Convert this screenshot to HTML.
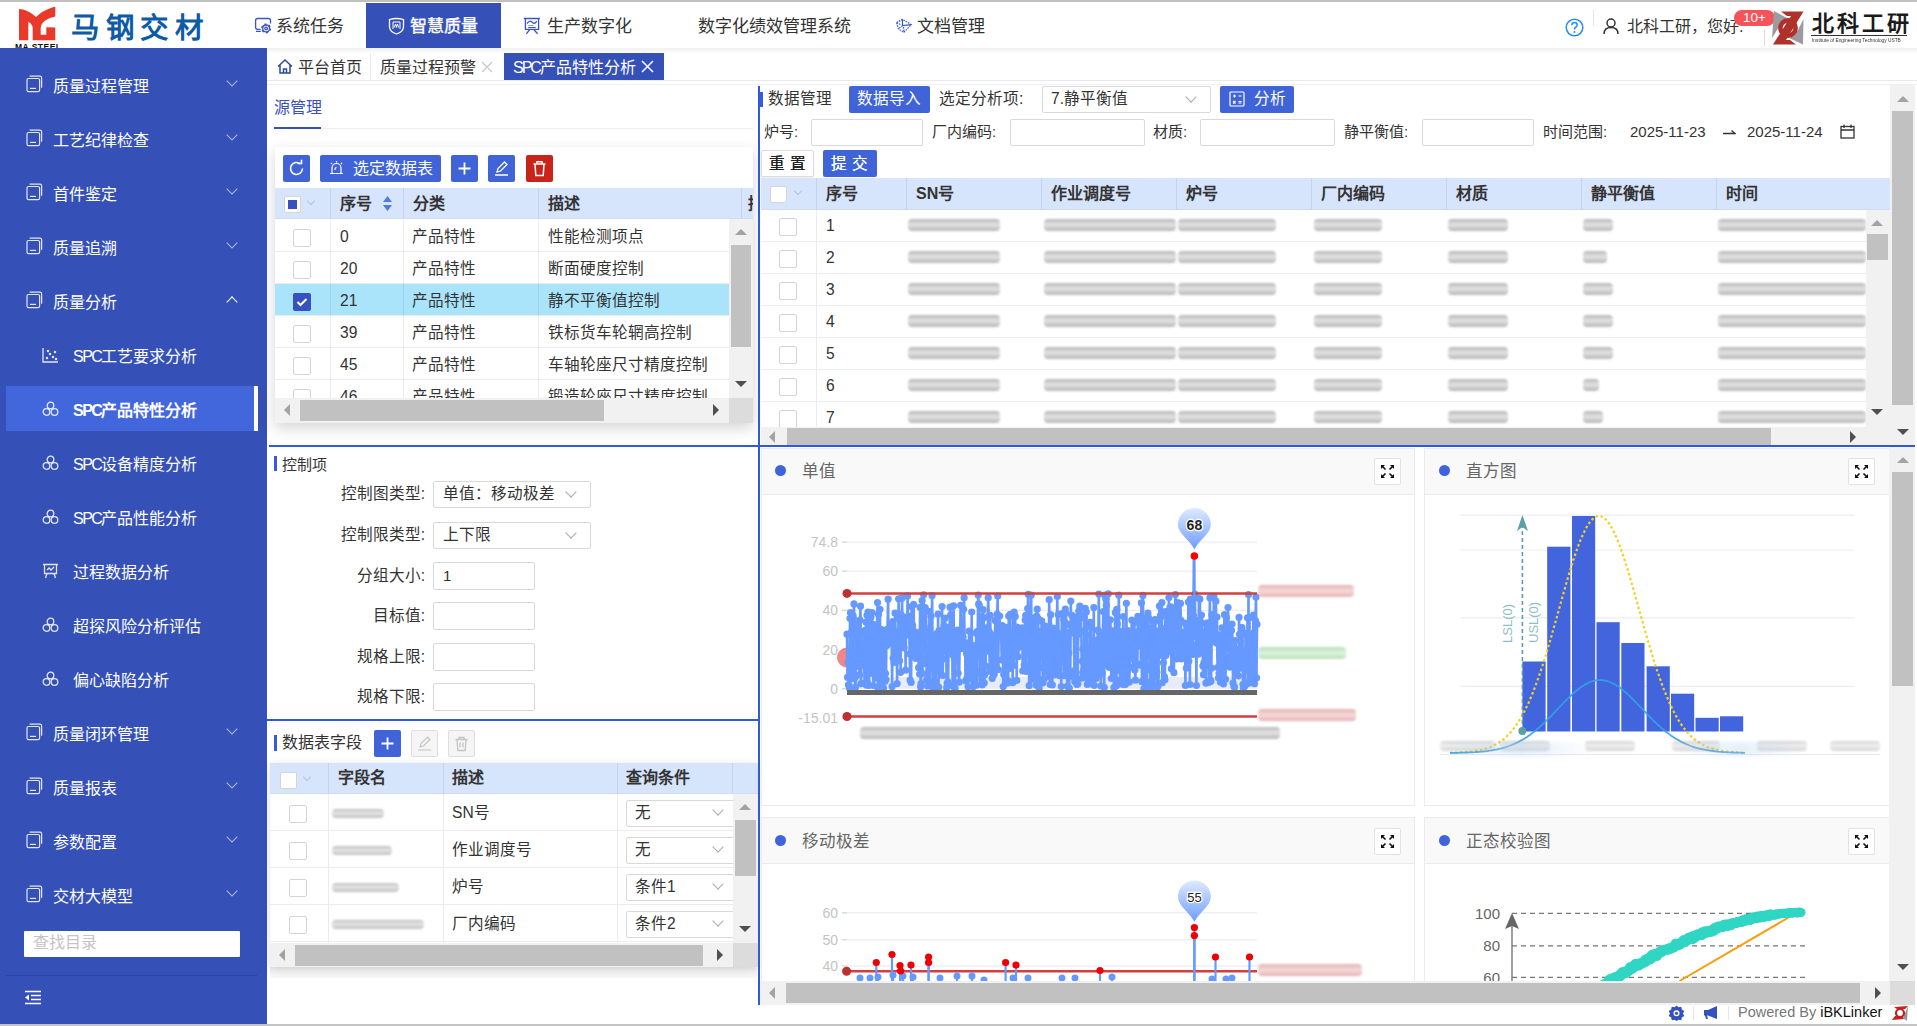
<!DOCTYPE html>
<html lang="zh-CN"><head><meta charset="utf-8">
<style>
*{box-sizing:border-box;margin:0;padding:0}
html,body{width:1917px;height:1026px;overflow:hidden;background:#fff;font-family:"Liberation Sans",sans-serif;color:#333}
.a{position:absolute}
.t{position:absolute;white-space:nowrap;line-height:1}
#topline{left:0;top:0;width:1917px;height:2px;background:#c4c4c4}
#header{left:0;top:2px;width:1917px;height:46px;background:#fff;box-shadow:0 1px 4px rgba(0,0,0,.12)}
.nav{font-size:17px;color:#333;top:18px!important}
#side{left:0;top:48px;width:267px;height:978px;background:#3551b8}
.si{position:absolute;left:0;width:267px;height:54px;color:#fff;font-size:16px}
.si .tx{position:absolute;left:53px;top:17px;line-height:20px;white-space:nowrap}
.si.sub .tx{left:73px}
.chev{position:absolute;left:227px;top:22px;width:8px;height:8px;border-right:1.5px solid rgba(255,255,255,.55);border-bottom:1.5px solid rgba(255,255,255,.55);transform:rotate(45deg)}
.chev.up{transform:rotate(-135deg);top:27px;border-color:#fff}
.ic1{position:absolute;left:27px;top:19px;width:15px;height:16px}
#tabbar{left:267px;top:48px;width:1650px;height:33px;background:linear-gradient(#f0f0f2,#fff 6px);border-bottom:1px solid #e8e9ee}
.tab{position:absolute;top:5px;height:27px;font-size:16px;line-height:27px;color:#333;white-space:nowrap}
.btn{position:absolute;background:#4064d8;border-radius:2px;color:#fff}
.chk{position:absolute;width:17px;height:17px;border:1px solid #d5d5d5;border-radius:2px;background:#fff}
.th{position:absolute;font-size:16px;font-weight:bold;color:#333;line-height:20px;white-space:nowrap}
.td{position:absolute;font-size:15.6px;color:#333;line-height:20px;white-space:nowrap}
.blur{position:absolute;background:linear-gradient(180deg,#8a8a8a,#d2d2d2 45%,#c8c8c8 55%,#8a8a8a);filter:blur(1px);border-radius:4px;opacity:.62}
.inp{position:absolute;border:1px solid #d9d9d9;border-radius:2px;background:#fff}
.lbl{position:absolute;font-size:15px;color:#333;line-height:20px;white-space:nowrap}
.dd{position:absolute;width:8px;height:8px;border-right:1px solid #aaa;border-bottom:1px solid #aaa;transform:rotate(45deg)}
</style></head><body>
<div id="topline" class="a"></div>
<div id="header" class="a"></div>
<div class="a" style="left:0;top:0;width:1917px;height:48px">
<svg class="a" style="left:0;top:0" width="70" height="48" viewBox="0 0 70 48">
<path d="M19,9 C24,9 31,12 36,17 C41,12 49,8 55.3,6.8 L55.3,16.6 C48,18 41,22 40.7,28 L40.7,34.8 L46.3,34.8 L46.3,27.3 L55.3,27.6 L55.3,40.2 L32.7,40.2 L32.7,28 C32.7,25 30,22.5 28.3,22 L28.3,40.2 L19,40.2 Z" fill="#e8392a"/>
<text x="15" y="50" font-family="Liberation Sans" font-weight="bold" font-size="8.5" fill="#111" textLength="46">MA STEEL</text>
</svg>
<div class="t" style="left:71px;top:14px;font-size:28.5px;font-weight:bold;color:#0d5aa7;letter-spacing:5.7px">马钢交材</div>
<svg class="a" style="left:250px;top:10px" width="30" height="30" viewBox="0 0 30 30" fill="none" stroke="#3a55c8" stroke-width="1.3"><path d="M20.5,13.5 V10.5 Q20.5,8.5 18.5,8.5 H7.6 Q5.6,8.5 5.6,10.5 V17.3 Q5.6,19.3 7.6,19.3 H10.5 M6,21.3 H10.8"/><circle cx="16.1" cy="18.4" r="3.4"/><circle cx="16.1" cy="18.4" r="4.3" stroke-width="1.4" stroke-dasharray="2.2 2.3"/><circle cx="16.1" cy="18.4" r="1.3"/></svg>
<div class="t nav" style="left:276px;top:15px">系统任务</div>
<div class="a" style="left:366px;top:3px;width:135px;height:45px;background:#3551b8"></div>
<svg class="a" style="left:388px;top:17px" width="17" height="18" viewBox="0 0 17 18" fill="none" stroke="#fff" stroke-width="1.3"><path d="M1.5 2.5 Q8.5 0.5 15.5 2.5 V10 Q15 15 8.5 17 Q2 15 1.5 10 Z"/><path d="M5 12 V5 H12 V12 M6.3 10.5 L7.5 7 L8.7 10.5 M8.3 10.5 L9.5 7 L10.7 10.5" stroke-width="1"/></svg>
<div class="t nav" style="left:410px;top:15px;color:#fff;-webkit-text-stroke:.35px #fff">智慧质量</div>
<svg class="a" style="left:518px;top:10px" width="30" height="30" viewBox="0 0 30 30" fill="none" stroke="#3a55c8" stroke-width="1.3"><path d="M5.8,8.5 H21.9" stroke-width="1.5"/><path d="M7.4,8.5 V19.3 H20.6 V8.5 M9,13.5 C11,11 12,11 13,11.3 C14.5,12 15,13.6 16,13.5 C17,13.4 18,12 19,11.3 M11.8,19.5 L8.3,23.8 M15.8,19.5 L19.6,23.8"/><rect x="10.2" y="15" width="5.6" height="1" fill="#8fa0e0" stroke="none"/><rect x="10.2" y="17" width="7.6" height="1" fill="#3a55c8" stroke="none"/></svg>
<div class="t nav" style="left:547px;top:15px">生产数字化</div>
<div class="t nav" style="left:698px;top:15px">数字化绩效管理系统</div>
<svg class="a" style="left:890px;top:10px" width="30" height="30" viewBox="0 0 30 30" fill="none" stroke="#3a55c8" stroke-width="1.2"><path d="M12.5,9.4 V15.6 L21.3,14.6"/><path d="M6.6,12.6 L12.5,9.4 L21.3,14.6 L13.9,22.4 L8.4,18.9 L6.6,12.6 M12.5,15.6 L8.4,18.9 M6.6,12.6 L10.5,14.5 M13.6,17 L13.9,22.4" stroke-dasharray="1.6 1"/></svg>
<div class="t nav" style="left:917px;top:15px">文档管理</div>
<svg class="a" style="left:1565px;top:18px" width="19" height="19" viewBox="0 0 19 19"><circle cx="9.5" cy="9.5" r="8.3" fill="none" stroke="#2a8cf0" stroke-width="1.5"/><path d="M6.8 7.3 Q6.8 4.6 9.5 4.6 Q12.2 4.6 12.2 7 Q12.2 8.6 10.3 9.5 Q9.5 10 9.5 11.5" fill="none" stroke="#2a8cf0" stroke-width="1.5"/><circle cx="9.5" cy="14" r="1" fill="#2a8cf0"/></svg>
<div class="a" style="left:1593px;top:10px;width:1px;height:16px;background:#e6e6e6"></div>
<svg class="a" style="left:1603px;top:18px" width="16" height="16" viewBox="0 0 16 16" fill="none" stroke="#333" stroke-width="1.5"><circle cx="8" cy="5" r="4"/><path d="M1 16 Q1 9.5 8 9.5 Q15 9.5 15 16"/></svg>
<div class="t" style="left:1627px;top:19px;font-size:16px;color:#333">北科工研，您好:</div>
<div class="a" style="left:1734px;top:10px;width:41px;height:16px;border-radius:8px;background:#f5535a;color:#fff;font-size:13.5px;line-height:16px;text-align:center">10+</div>
<div class="a" style="left:1764px;top:30px;width:1px;height:16px;background:#ddd"></div>
<svg class="a" style="left:1765px;top:5px" width="50" height="45" viewBox="1765 5 50 45"><path d="M1774,11 L1789,19 L1783,21 L1779,27 L1772,38Z" fill="#9b9ba0"/><path d="M1803.5,19 L1803,44.5 L1789,38 L1795,35 L1798,30Z" fill="#9b9ba0"/><path d="M1781,11.6 L1803.5,11.6 L1786,40 L1790,40 L1796,44.6 L1773,44.6 L1791,16 L1787,16 Z" fill="#b0302a"/><circle cx="1788" cy="28" r="7.6" fill="none" stroke="#b0302a" stroke-width="4.6"/></svg>
<div class="t" style="left:1812px;top:13px;font-size:22px;font-weight:bold;color:#1a1a1a;letter-spacing:3px">北科工研</div>
<div class="a" style="left:1811px;top:35px;width:96px;height:1px;background:#333"></div>
<div class="a" style="left:1812px;top:37px;width:96px;height:8px;overflow:hidden"><div class="t" style="left:0;top:0;font-size:6px;color:#333;transform:scaleX(.8);transform-origin:0 0">Institute of Engineering Technology USTB</div></div>
</div>
<div id="side" class="a"></div>
<svg class="a" style="left:26px;top:75px" width="18" height="18" viewBox="0 0 18 18" fill="none" stroke="rgba(255,255,255,.85)" stroke-width="1.2"><path d="M3.6,1.1 H14 Q15.6,1.1 15.6,2.7 V12.8"/><rect x="1" y="3.5" width="12.6" height="13.1" rx="1.6"/><path d="M4,13.4 H10"/></svg>
<div class="t" style="left:53px;top:79px;font-size:16px;color:#fff">质量过程管理</div>
<div class="a" style="left:228px;top:77px;width:8px;height:8px;border-right:1.6px solid rgba(255,255,255,.6);border-bottom:1.6px solid rgba(255,255,255,.6);transform:rotate(45deg)"></div>
<svg class="a" style="left:26px;top:129px" width="18" height="18" viewBox="0 0 18 18" fill="none" stroke="rgba(255,255,255,.85)" stroke-width="1.2"><path d="M3.6,1.1 H14 Q15.6,1.1 15.6,2.7 V12.8"/><rect x="1" y="3.5" width="12.6" height="13.1" rx="1.6"/><path d="M4,13.4 H10"/></svg>
<div class="t" style="left:53px;top:133px;font-size:16px;color:#fff">工艺纪律检查</div>
<div class="a" style="left:228px;top:131px;width:8px;height:8px;border-right:1.6px solid rgba(255,255,255,.6);border-bottom:1.6px solid rgba(255,255,255,.6);transform:rotate(45deg)"></div>
<svg class="a" style="left:26px;top:183px" width="18" height="18" viewBox="0 0 18 18" fill="none" stroke="rgba(255,255,255,.85)" stroke-width="1.2"><path d="M3.6,1.1 H14 Q15.6,1.1 15.6,2.7 V12.8"/><rect x="1" y="3.5" width="12.6" height="13.1" rx="1.6"/><path d="M4,13.4 H10"/></svg>
<div class="t" style="left:53px;top:187px;font-size:16px;color:#fff">首件鉴定</div>
<div class="a" style="left:228px;top:185px;width:8px;height:8px;border-right:1.6px solid rgba(255,255,255,.6);border-bottom:1.6px solid rgba(255,255,255,.6);transform:rotate(45deg)"></div>
<svg class="a" style="left:26px;top:237px" width="18" height="18" viewBox="0 0 18 18" fill="none" stroke="rgba(255,255,255,.85)" stroke-width="1.2"><path d="M3.6,1.1 H14 Q15.6,1.1 15.6,2.7 V12.8"/><rect x="1" y="3.5" width="12.6" height="13.1" rx="1.6"/><path d="M4,13.4 H10"/></svg>
<div class="t" style="left:53px;top:241px;font-size:16px;color:#fff">质量追溯</div>
<div class="a" style="left:228px;top:239px;width:8px;height:8px;border-right:1.6px solid rgba(255,255,255,.6);border-bottom:1.6px solid rgba(255,255,255,.6);transform:rotate(45deg)"></div>
<svg class="a" style="left:26px;top:291px" width="18" height="18" viewBox="0 0 18 18" fill="none" stroke="rgba(255,255,255,.85)" stroke-width="1.2"><path d="M3.6,1.1 H14 Q15.6,1.1 15.6,2.7 V12.8"/><rect x="1" y="3.5" width="12.6" height="13.1" rx="1.6"/><path d="M4,13.4 H10"/></svg>
<div class="t" style="left:53px;top:295px;font-size:16px;color:#fff">质量分析</div>
<div class="a" style="left:228px;top:298px;width:8px;height:8px;border-right:1.8px solid #fff;border-bottom:1.8px solid #fff;transform:rotate(-135deg)"></div>
<svg class="a" style="left:42px;top:347px" width="17" height="16" viewBox="0 0 17 16" fill="none" stroke="rgba(255,255,255,.85)" stroke-width="1.3"><path d="M1 1 V15 H16"/><circle cx="5" cy="11" r=".6"/><circle cx="8" cy="7" r=".6"/><circle cx="11" cy="10" r=".6"/><circle cx="13" cy="5" r=".6"/><circle cx="6" cy="4" r=".6"/><circle cx="14" cy="12" r=".6"/></svg>
<div class="t" style="left:73px;top:349px;font-size:16px;color:#fff;font-weight:normal"><span style="letter-spacing:-1.5px">SPC</span>工艺要求分析</div>
<div class="a" style="left:6px;top:386px;width:251px;height:45px;background:#4266dc"></div>
<div class="a" style="left:254px;top:386px;width:4px;height:45px;background:#fffce8"></div>
<svg class="a" style="left:42px;top:401px" width="17" height="16" viewBox="0 0 17 16" fill="none" stroke="rgba(255,255,255,.85)" stroke-width="1.3"><circle cx="8.5" cy="4.5" r="3.3"/><circle cx="4.5" cy="11" r="3.3"/><circle cx="12.5" cy="11" r="3.3"/></svg>
<div class="t" style="left:73px;top:403px;font-size:16px;color:#fff;font-weight:bold"><span style="letter-spacing:-1.5px">SPC</span>产品特性分析</div>
<svg class="a" style="left:42px;top:455px" width="17" height="16" viewBox="0 0 17 16" fill="none" stroke="rgba(255,255,255,.85)" stroke-width="1.3"><circle cx="8.5" cy="4.5" r="3.3"/><circle cx="4.5" cy="11" r="3.3"/><circle cx="12.5" cy="11" r="3.3"/></svg>
<div class="t" style="left:73px;top:457px;font-size:16px;color:#fff;font-weight:normal"><span style="letter-spacing:-1.5px">SPC</span>设备精度分析</div>
<svg class="a" style="left:42px;top:509px" width="17" height="16" viewBox="0 0 17 16" fill="none" stroke="rgba(255,255,255,.85)" stroke-width="1.3"><circle cx="8.5" cy="4.5" r="3.3"/><circle cx="4.5" cy="11" r="3.3"/><circle cx="12.5" cy="11" r="3.3"/></svg>
<div class="t" style="left:73px;top:511px;font-size:16px;color:#fff;font-weight:normal"><span style="letter-spacing:-1.5px">SPC</span>产品性能分析</div>
<svg class="a" style="left:42px;top:563px" width="17" height="16" viewBox="0 0 17 16" fill="none" stroke="rgba(255,255,255,.85)" stroke-width="1.3"><path d="M1 1.5 H16 M2.5 1.5 V10.5 H14.5 V1.5 M5 10.5 L3.5 15 M12 10.5 L13.5 15 M5 7 L7 5 L9 7 L12 4"/></svg>
<div class="t" style="left:73px;top:565px;font-size:16px;color:#fff;font-weight:normal">过程数据分析</div>
<svg class="a" style="left:42px;top:617px" width="17" height="16" viewBox="0 0 17 16" fill="none" stroke="rgba(255,255,255,.85)" stroke-width="1.3"><circle cx="8.5" cy="4.5" r="3.3"/><circle cx="4.5" cy="11" r="3.3"/><circle cx="12.5" cy="11" r="3.3"/></svg>
<div class="t" style="left:73px;top:619px;font-size:16px;color:#fff;font-weight:normal">超探风险分析评估</div>
<svg class="a" style="left:42px;top:671px" width="17" height="16" viewBox="0 0 17 16" fill="none" stroke="rgba(255,255,255,.85)" stroke-width="1.3"><circle cx="8.5" cy="4.5" r="3.3"/><circle cx="4.5" cy="11" r="3.3"/><circle cx="12.5" cy="11" r="3.3"/></svg>
<div class="t" style="left:73px;top:673px;font-size:16px;color:#fff;font-weight:normal">偏心缺陷分析</div>
<svg class="a" style="left:26px;top:723px" width="18" height="18" viewBox="0 0 18 18" fill="none" stroke="rgba(255,255,255,.85)" stroke-width="1.2"><path d="M3.6,1.1 H14 Q15.6,1.1 15.6,2.7 V12.8"/><rect x="1" y="3.5" width="12.6" height="13.1" rx="1.6"/><path d="M4,13.4 H10"/></svg>
<div class="t" style="left:53px;top:727px;font-size:16px;color:#fff">质量闭环管理</div>
<div class="a" style="left:228px;top:725px;width:8px;height:8px;border-right:1.6px solid rgba(255,255,255,.6);border-bottom:1.6px solid rgba(255,255,255,.6);transform:rotate(45deg)"></div>
<svg class="a" style="left:26px;top:777px" width="18" height="18" viewBox="0 0 18 18" fill="none" stroke="rgba(255,255,255,.85)" stroke-width="1.2"><path d="M3.6,1.1 H14 Q15.6,1.1 15.6,2.7 V12.8"/><rect x="1" y="3.5" width="12.6" height="13.1" rx="1.6"/><path d="M4,13.4 H10"/></svg>
<div class="t" style="left:53px;top:781px;font-size:16px;color:#fff">质量报表</div>
<div class="a" style="left:228px;top:779px;width:8px;height:8px;border-right:1.6px solid rgba(255,255,255,.6);border-bottom:1.6px solid rgba(255,255,255,.6);transform:rotate(45deg)"></div>
<svg class="a" style="left:26px;top:831px" width="18" height="18" viewBox="0 0 18 18" fill="none" stroke="rgba(255,255,255,.85)" stroke-width="1.2"><path d="M3.6,1.1 H14 Q15.6,1.1 15.6,2.7 V12.8"/><rect x="1" y="3.5" width="12.6" height="13.1" rx="1.6"/><path d="M4,13.4 H10"/></svg>
<div class="t" style="left:53px;top:835px;font-size:16px;color:#fff">参数配置</div>
<div class="a" style="left:228px;top:833px;width:8px;height:8px;border-right:1.6px solid rgba(255,255,255,.6);border-bottom:1.6px solid rgba(255,255,255,.6);transform:rotate(45deg)"></div>
<svg class="a" style="left:26px;top:885px" width="18" height="18" viewBox="0 0 18 18" fill="none" stroke="rgba(255,255,255,.85)" stroke-width="1.2"><path d="M3.6,1.1 H14 Q15.6,1.1 15.6,2.7 V12.8"/><rect x="1" y="3.5" width="12.6" height="13.1" rx="1.6"/><path d="M4,13.4 H10"/></svg>
<div class="t" style="left:53px;top:889px;font-size:16px;color:#fff">交材大模型</div>
<div class="a" style="left:228px;top:887px;width:8px;height:8px;border-right:1.6px solid rgba(255,255,255,.6);border-bottom:1.6px solid rgba(255,255,255,.6);transform:rotate(45deg)"></div>
<div class="a" style="left:24px;top:931px;width:216px;height:26px;background:#fff;border-radius:1px"></div>
<div class="t" style="left:33px;top:935px;font-size:16px;color:#c4c4c4">查找目录</div>
<div class="a" style="left:6px;top:975px;width:251px;height:1px;background:#2b449e"></div>
<svg class="a" style="left:24px;top:990px" width="18" height="15" viewBox="0 0 18 15" fill="none" stroke="#fff" stroke-width="1.6"><path d="M1 1.5 H17 M7 5.5 H17 M7 9.5 H17 M1 13.5 H17"/><path d="M1 7.5 L5 4.5 V10.5Z" fill="#fff" stroke="none"/></svg>
<div id="tabbar" class="a"></div>

<svg class="a" style="left:277px;top:59px" width="16" height="15" viewBox="0 0 16 15" fill="none" stroke="#2c4a9a" stroke-width="1.5"><path d="M1 7.5 L8 1 L15 7.5 M3 6 V14 H13 V6 M6.5 14 V10 H9.5 V14"/></svg>
<div class="t" style="left:298px;top:60px;font-size:16px;color:#333">平台首页</div>
<div class="a" style="left:370px;top:53px;width:1px;height:27px;background:#e8e8e8"></div>
<div class="t" style="left:380px;top:60px;font-size:16px;color:#333">质量过程预警</div>
<svg class="a" style="left:481px;top:61px" width="12" height="12" viewBox="0 0 12 12" stroke="#c8c8c8" stroke-width="1.3"><path d="M1 1 L11 11 M11 1 L1 11"/></svg>
<div class="a" style="left:504px;top:53px;width:160px;height:27px;background:#3551b8"></div>
<div class="t" style="left:513px;top:60px;font-size:16px;color:#fff"><span style="letter-spacing:-2px">SPC</span>产品特性分析</div>
<svg class="a" style="left:641px;top:60px" width="13" height="13" viewBox="0 0 13 13" stroke="#fff" stroke-width="1.5"><path d="M1 1 L12 12 M12 1 L1 12"/></svg>


<!-- LEFT TOP PANEL -->
<div class="a" style="left:267px;top:84px;width:1650px;height:1px;background:#f0f0f2"></div>
<div class="t" style="left:274px;top:100px;font-size:16px;color:#3a4fc0">源管理</div>
<div class="a" style="left:274px;top:127px;width:47px;height:2px;background:#3551b8"></div>
<div class="a" style="left:321px;top:128px;width:432px;height:1px;background:#eceef2"></div>
<div class="a" style="left:275px;top:147px;width:478px;height:276px;background:#fff;box-shadow:0 5px 14px rgba(0,0,0,.17)"></div>
<div class="btn" style="left:283px;top:155px;width:27px;height:27px"></div>
<svg class="a" style="left:287px;top:159px" width="19" height="19" viewBox="0 0 19 19" fill="none" stroke="#fff" stroke-width="1.6"><path d="M15.5 9.5 A6 6 0 1 1 13.5 5"/><path d="M10.5 4.5 L14.5 4.5 L14.5 0.8"/></svg>
<div class="btn" style="left:320px;top:155px;width:121px;height:27px"></div>
<svg class="a" style="left:329px;top:160px" width="15" height="15" viewBox="0 0 15 15" fill="none" stroke="#fff" stroke-width="1.2"><path d="M3 13 V8 A4.5 4.5 0 0 1 12 8 V13 M1 13.5 H14 M7.5 1 V2.5 M2 3 L3 4 M13 3 L12 4 M6 10 V9 A1.5 1.5 0 0 1 7.5 7.5"/></svg>
<div class="t" style="left:353px;top:161px;font-size:16px;color:#fff">选定数据表</div>
<div class="btn" style="left:451px;top:155px;width:27px;height:27px"></div>
<svg class="a" style="left:457px;top:161px" width="15" height="15" viewBox="0 0 15 15" stroke="#fff" stroke-width="1.8"><path d="M7.5 1.5 V13.5 M1.5 7.5 H13.5"/></svg>
<div class="btn" style="left:488px;top:155px;width:27px;height:27px"></div>
<svg class="a" style="left:493px;top:160px" width="17" height="17" viewBox="0 0 17 17" fill="none" stroke="#fff" stroke-width="1.3"><path d="M4 12 L5 8.5 L11.5 2 L14 4.5 L7.5 11 Z M2 15 H15"/></svg>
<div class="btn" style="left:526px;top:155px;width:27px;height:27px;background:#c9241a"></div>
<svg class="a" style="left:532px;top:160px" width="15" height="17" viewBox="0 0 15 17" fill="none" stroke="#fff" stroke-width="1.5"><path d="M1.5 4 H13.5 M5 4 V1.8 H10 V4 M3 4 L3.8 15.5 H11.2 L12 4"/></svg>
<div class="a" style="left:275px;top:188px;width:478px;height:31px;background:#d6e4fc;border-bottom:1px solid #cfdcf3"></div>
<div class="a" style="left:330px;top:188px;width:1px;height:31px;background:#c5d4ee"></div>
<div class="a" style="left:403px;top:188px;width:1px;height:31px;background:#c5d4ee"></div>
<div class="a" style="left:538px;top:188px;width:1px;height:31px;background:#c5d4ee"></div>
<div class="a" style="left:741px;top:188px;width:1px;height:31px;background:#c5d4ee"></div>
<div class="chk" style="left:284px;top:196px"></div>
<div class="a" style="left:288px;top:200px;width:9px;height:9px;background:#3851c0"></div>
<div class="a" style="left:308px;top:198px;width:6px;height:6px;border-right:1px solid #b8c4dc;border-bottom:1px solid #b8c4dc;transform:rotate(45deg)"></div>
<div class="th" style="left:340px;top:194px">序号</div>
<svg class="a" style="left:383px;top:196px" width="9" height="15" viewBox="0 0 9 15" fill="#4f7be8"><path d="M4.5 0 L9 6 H0Z M0 9 H9 L4.5 15Z"/></svg>
<div class="th" style="left:413px;top:194px">分类</div>
<div class="th" style="left:548px;top:194px">描述</div>
<div class="a" style="left:741px;top:188px;width:12px;height:31px;overflow:hidden"><div class="th" style="left:7px;top:6px">描</div></div>
<div class="a" style="left:275px;top:220px;width:454px;height:178px;overflow:hidden"><div class="a" style="left:0;top:0px;width:454px;height:32px;background:#fff;border-bottom:1px solid #ececec"></div><div class="chk" style="left:18px;top:9px;width:18px;height:18px"></div><div class="td" style="left:65px;top:7px">0</div><div class="td" style="left:137px;top:7px">产品特性</div><div class="td" style="left:273px;top:7px">性能检测项点</div><div class="a" style="left:0;top:32px;width:454px;height:32px;background:#fff;border-bottom:1px solid #ececec"></div><div class="chk" style="left:18px;top:41px;width:18px;height:18px"></div><div class="td" style="left:65px;top:39px">20</div><div class="td" style="left:137px;top:39px">产品特性</div><div class="td" style="left:273px;top:39px">断面硬度控制</div><div class="a" style="left:0;top:64px;width:454px;height:32px;background:#a9e4fb;border-bottom:1px solid #ececec"></div><div class="a" style="left:18px;top:73px;width:18px;height:18px;background:#3851c0;border-radius:2px"></div><svg class="a" style="left:21px;top:77px" width="12" height="10" viewBox="0 0 12 10" fill="none" stroke="#fff" stroke-width="2"><path d="M1.5 5 L4.5 8 L10.5 2"/></svg><div class="td" style="left:65px;top:71px">21</div><div class="td" style="left:137px;top:71px">产品特性</div><div class="td" style="left:273px;top:71px">静不平衡值控制</div><div class="a" style="left:0;top:96px;width:454px;height:32px;background:#fff;border-bottom:1px solid #ececec"></div><div class="chk" style="left:18px;top:105px;width:18px;height:18px"></div><div class="td" style="left:65px;top:103px">39</div><div class="td" style="left:137px;top:103px">产品特性</div><div class="td" style="left:273px;top:103px">铁标货车轮辋高控制</div><div class="a" style="left:0;top:128px;width:454px;height:32px;background:#fff;border-bottom:1px solid #ececec"></div><div class="chk" style="left:18px;top:137px;width:18px;height:18px"></div><div class="td" style="left:65px;top:135px">45</div><div class="td" style="left:137px;top:135px">产品特性</div><div class="td" style="left:273px;top:135px">车轴轮座尺寸精度控制</div><div class="a" style="left:0;top:160px;width:454px;height:32px;background:#fff;border-bottom:1px solid #ececec"></div><div class="chk" style="left:18px;top:169px;width:18px;height:18px"></div><div class="td" style="left:65px;top:167px">46</div><div class="td" style="left:137px;top:167px">产品特性</div><div class="td" style="left:273px;top:167px">锻造轮座尺寸精度控制</div><div class="a" style="left:55px;top:0;width:1px;height:179px;background:rgba(0,0,0,.075)"></div><div class="a" style="left:128px;top:0;width:1px;height:179px;background:rgba(0,0,0,.075)"></div><div class="a" style="left:263px;top:0;width:1px;height:179px;background:rgba(0,0,0,.075)"></div></div>
<div class="a" style="left:729px;top:219px;width:24px;height:179px;background:#f1f1f1"></div>
<div class="a" style="left:731px;top:245px;width:20px;height:102px;background:#c1c1c1"></div>
<svg class="a" style="left:735px;top:228px" width="12" height="8" viewBox="0 0 12 8" fill="#a3a3a3"><path d="M0 7 L6 1 L12 7Z"/></svg>
<svg class="a" style="left:735px;top:380px" width="12" height="8" viewBox="0 0 12 8" fill="#505050"><path d="M0 1 L6 7 L12 1Z"/></svg>
<div class="a" style="left:275px;top:398px;width:454px;height:25px;background:#f1f1f1"></div>
<div class="a" style="left:300px;top:400px;width:304px;height:21px;background:#c1c1c1"></div>
<svg class="a" style="left:283px;top:404px" width="8" height="12" viewBox="0 0 8 12" fill="#a3a3a3"><path d="M7 0 L1 6 L7 12Z"/></svg>
<svg class="a" style="left:712px;top:404px" width="8" height="12" viewBox="0 0 8 12" fill="#505050"><path d="M1 0 L7 6 L1 12Z"/></svg>
<div class="a" style="left:729px;top:398px;width:24px;height:25px;background:#dcdcdc"></div>


<!-- RIGHT TOP PANEL -->
<div class="a" style="left:760px;top:92px;width:3px;height:15px;background:#3a5bd9"></div>
<div class="t" style="left:768px;top:91px;font-size:15.6px;color:#333">数据管理</div>
<div class="btn" style="left:849px;top:86px;width:81px;height:27px"></div>
<div class="t" style="left:857px;top:91px;font-size:15.6px;color:#fff">数据导入</div>
<div class="t" style="left:939px;top:91px;font-size:15.6px;color:#333">选定分析项:</div>
<div class="inp" style="left:1042px;top:86px;width:169px;height:27px"></div>
<div class="t" style="left:1051px;top:91px;font-size:15.6px;color:#333">7.静平衡值</div>
<div class="dd" style="left:1187px;top:93px"></div>
<div class="btn" style="left:1220px;top:86px;width:74px;height:27px"></div>
<svg class="a" style="left:1229px;top:91px" width="16" height="16" viewBox="0 0 16 16" fill="none" stroke="#fff" stroke-width="1.2"><rect x="1" y="1" width="14" height="14" rx="1"/><path d="M4 5 H7 M5.5 3.5 V6.5 M9.5 5 H12.5 M4 10 L6.5 12.5 M6.5 10 L4 12.5 M9.5 10.5 H12.5 M9.5 12 H12.5"/></svg>
<div class="t" style="left:1254px;top:91px;font-size:15.6px;color:#fff">分析</div>
<div class="lbl" style="left:764px;top:122px">炉号:</div>
<div class="inp" style="left:811px;top:119px;width:112px;height:27px"></div>
<div class="lbl" style="left:932px;top:122px">厂内编码:</div>
<div class="inp" style="left:1010px;top:119px;width:135px;height:27px"></div>
<div class="lbl" style="left:1153px;top:122px">材质:</div>
<div class="inp" style="left:1200px;top:119px;width:135px;height:27px"></div>
<div class="lbl" style="left:1344px;top:122px">静平衡值:</div>
<div class="inp" style="left:1422px;top:119px;width:112px;height:27px"></div>
<div class="lbl" style="left:1543px;top:122px">时间范围:</div>
<div class="lbl" style="left:1630px;top:122px;font-size:15px">2025-11-23</div>
<svg class="a" style="left:1722px;top:128px" width="14" height="8" viewBox="0 0 14 8" fill="none" stroke="#333" stroke-width="1.3"><path d="M1 5.5 H13 L9.5 2.5"/></svg>
<div class="lbl" style="left:1747px;top:122px;font-size:15px">2025-11-24</div>
<svg class="a" style="left:1840px;top:124px" width="15" height="15" viewBox="0 0 15 15" fill="none" stroke="#333" stroke-width="1.3"><rect x="1" y="2.5" width="13" height="11.5"/><path d="M1 6 H14 M4 0.5 V4 M11 0.5 V4"/></svg>
<div class="a" style="left:761px;top:150px;width:53px;height:27px;background:#fff;border:1px solid #dcdcdc;border-radius:2px;box-shadow:0 1px 2px rgba(0,0,0,.08)"></div>
<div class="t" style="left:769px;top:156px;font-size:15.6px;color:#222;letter-spacing:5px;text-shadow:0 0 .5px #222">重置</div>
<div class="btn" style="left:823px;top:150px;width:54px;height:27px"></div>
<div class="t" style="left:831px;top:156px;font-size:15.6px;color:#fff;letter-spacing:5px;text-shadow:0 0 .6px #fff">提交</div>
<div class="a" style="left:761px;top:178px;width:1129px;height:32px;background:#d6e4fc;border-bottom:1px solid #cfdcf3"></div>
<div class="a" style="left:816px;top:178px;width:1px;height:32px;background:#c5d4ee"></div><div class="a" style="left:906px;top:178px;width:1px;height:32px;background:#c5d4ee"></div><div class="a" style="left:1041px;top:178px;width:1px;height:32px;background:#c5d4ee"></div><div class="a" style="left:1176px;top:178px;width:1px;height:32px;background:#c5d4ee"></div><div class="a" style="left:1311px;top:178px;width:1px;height:32px;background:#c5d4ee"></div><div class="a" style="left:1446px;top:178px;width:1px;height:32px;background:#c5d4ee"></div><div class="a" style="left:1581px;top:178px;width:1px;height:32px;background:#c5d4ee"></div><div class="a" style="left:1716px;top:178px;width:1px;height:32px;background:#c5d4ee"></div><div class="chk" style="left:770px;top:186px"></div><div class="a" style="left:795px;top:188px;width:6px;height:6px;border-right:1px solid #b8c4dc;border-bottom:1px solid #b8c4dc;transform:rotate(45deg)"></div><div class="th" style="left:826px;top:184px">序号</div><div class="th" style="left:916px;top:184px">SN号</div><div class="th" style="left:1051px;top:184px">作业调度号</div><div class="th" style="left:1186px;top:184px">炉号</div><div class="th" style="left:1321px;top:184px">厂内编码</div><div class="th" style="left:1456px;top:184px">材质</div><div class="th" style="left:1591px;top:184px">静平衡值</div><div class="th" style="left:1726px;top:184px">时间</div><div class="a" style="left:761px;top:210px;width:1105px;height:217px;overflow:hidden;background:#fff"><div class="a" style="left:0;top:0px;width:1105px;height:32px;border-bottom:1px solid #ececec"></div><div class="chk" style="left:18px;top:8px;width:18px;height:18px"></div><div class="td" style="left:65px;top:6px">1</div><div class="blur" style="left:147px;top:9px;width:92px;height:12px"></div><div class="blur" style="left:283px;top:9px;width:132px;height:12px"></div><div class="blur" style="left:417px;top:9px;width:98px;height:12px"></div><div class="blur" style="left:553px;top:9px;width:68px;height:12px"></div><div class="blur" style="left:687px;top:9px;width:60px;height:12px"></div><div class="blur" style="left:822px;top:9px;width:30px;height:12px"></div><div class="blur" style="left:957px;top:9px;width:148px;height:12px"></div><div class="a" style="left:0;top:32px;width:1105px;height:32px;border-bottom:1px solid #ececec"></div><div class="chk" style="left:18px;top:40px;width:18px;height:18px"></div><div class="td" style="left:65px;top:38px">2</div><div class="blur" style="left:147px;top:41px;width:92px;height:12px"></div><div class="blur" style="left:283px;top:41px;width:132px;height:12px"></div><div class="blur" style="left:417px;top:41px;width:98px;height:12px"></div><div class="blur" style="left:553px;top:41px;width:68px;height:12px"></div><div class="blur" style="left:687px;top:41px;width:60px;height:12px"></div><div class="blur" style="left:822px;top:41px;width:24px;height:12px"></div><div class="blur" style="left:957px;top:41px;width:148px;height:12px"></div><div class="a" style="left:0;top:64px;width:1105px;height:32px;border-bottom:1px solid #ececec"></div><div class="chk" style="left:18px;top:72px;width:18px;height:18px"></div><div class="td" style="left:65px;top:70px">3</div><div class="blur" style="left:147px;top:73px;width:92px;height:12px"></div><div class="blur" style="left:283px;top:73px;width:132px;height:12px"></div><div class="blur" style="left:417px;top:73px;width:98px;height:12px"></div><div class="blur" style="left:553px;top:73px;width:68px;height:12px"></div><div class="blur" style="left:687px;top:73px;width:60px;height:12px"></div><div class="blur" style="left:822px;top:73px;width:30px;height:12px"></div><div class="blur" style="left:957px;top:73px;width:148px;height:12px"></div><div class="a" style="left:0;top:96px;width:1105px;height:32px;border-bottom:1px solid #ececec"></div><div class="chk" style="left:18px;top:104px;width:18px;height:18px"></div><div class="td" style="left:65px;top:102px">4</div><div class="blur" style="left:147px;top:105px;width:92px;height:12px"></div><div class="blur" style="left:283px;top:105px;width:132px;height:12px"></div><div class="blur" style="left:417px;top:105px;width:98px;height:12px"></div><div class="blur" style="left:553px;top:105px;width:68px;height:12px"></div><div class="blur" style="left:687px;top:105px;width:60px;height:12px"></div><div class="blur" style="left:822px;top:105px;width:30px;height:12px"></div><div class="blur" style="left:957px;top:105px;width:148px;height:12px"></div><div class="a" style="left:0;top:128px;width:1105px;height:32px;border-bottom:1px solid #ececec"></div><div class="chk" style="left:18px;top:136px;width:18px;height:18px"></div><div class="td" style="left:65px;top:134px">5</div><div class="blur" style="left:147px;top:137px;width:92px;height:12px"></div><div class="blur" style="left:283px;top:137px;width:132px;height:12px"></div><div class="blur" style="left:417px;top:137px;width:98px;height:12px"></div><div class="blur" style="left:553px;top:137px;width:68px;height:12px"></div><div class="blur" style="left:687px;top:137px;width:60px;height:12px"></div><div class="blur" style="left:822px;top:137px;width:30px;height:12px"></div><div class="blur" style="left:957px;top:137px;width:148px;height:12px"></div><div class="a" style="left:0;top:160px;width:1105px;height:32px;border-bottom:1px solid #ececec"></div><div class="chk" style="left:18px;top:168px;width:18px;height:18px"></div><div class="td" style="left:65px;top:166px">6</div><div class="blur" style="left:147px;top:169px;width:92px;height:12px"></div><div class="blur" style="left:283px;top:169px;width:132px;height:12px"></div><div class="blur" style="left:417px;top:169px;width:98px;height:12px"></div><div class="blur" style="left:553px;top:169px;width:68px;height:12px"></div><div class="blur" style="left:687px;top:169px;width:60px;height:12px"></div><div class="blur" style="left:822px;top:169px;width:16px;height:12px"></div><div class="blur" style="left:957px;top:169px;width:148px;height:12px"></div><div class="a" style="left:0;top:192px;width:1105px;height:32px;border-bottom:1px solid #ececec"></div><div class="chk" style="left:18px;top:200px;width:18px;height:18px"></div><div class="td" style="left:65px;top:198px">7</div><div class="blur" style="left:147px;top:201px;width:92px;height:12px"></div><div class="blur" style="left:283px;top:201px;width:132px;height:12px"></div><div class="blur" style="left:417px;top:201px;width:98px;height:12px"></div><div class="blur" style="left:553px;top:201px;width:68px;height:12px"></div><div class="blur" style="left:687px;top:201px;width:60px;height:12px"></div><div class="blur" style="left:822px;top:201px;width:20px;height:12px"></div><div class="blur" style="left:957px;top:201px;width:148px;height:12px"></div><div class="a" style="left:55px;top:0;width:1px;height:217px;background:#ececec"></div></div>
<div class="a" style="left:1866px;top:210px;width:24px;height:217px;background:#f1f1f1"></div>
<div class="a" style="left:1867px;top:234px;width:21px;height:26px;background:#c1c1c1"></div>
<svg class="a" style="left:1871px;top:219px" width="12" height="8" viewBox="0 0 12 8" fill="#a3a3a3"><path d="M0 7 L6 1 L12 7Z"/></svg>
<svg class="a" style="left:1871px;top:408px" width="12" height="8" viewBox="0 0 12 8" fill="#505050"><path d="M0 1 L6 7 L12 1Z"/></svg>
<div class="a" style="left:761px;top:427px;width:1129px;height:18px;background:#f1f1f1"></div>
<div class="a" style="left:787px;top:428px;width:984px;height:17px;background:#c1c1c1"></div>
<svg class="a" style="left:768px;top:431px" width="8" height="12" viewBox="0 0 8 12" fill="#a3a3a3"><path d="M7 0 L1 6 L7 12Z"/></svg>
<svg class="a" style="left:1849px;top:431px" width="8" height="12" viewBox="0 0 8 12" fill="#505050"><path d="M1 0 L7 6 L1 12Z"/></svg>
<div class="a" style="left:1890px;top:85px;width:25px;height:360px;background:#f1f1f1"></div>
<div class="a" style="left:1892px;top:111px;width:21px;height:294px;background:#c1c1c1"></div>
<svg class="a" style="left:1897px;top:95px" width="12" height="8" viewBox="0 0 12 8" fill="#a3a3a3"><path d="M0 7 L6 1 L12 7Z"/></svg>
<svg class="a" style="left:1897px;top:428px" width="12" height="8" viewBox="0 0 12 8" fill="#505050"><path d="M0 1 L6 7 L12 1Z"/></svg>

<!-- CONTROL PANEL -->
<div class="a" style="left:274px;top:456px;width:3px;height:15px;background:#3a5bd9"></div>
<div class="t" style="left:282px;top:457px;font-size:15px;color:#333">控制项</div>
<div class="lbl" style="left:225px;width:200px;text-align:right;top:484px;font-size:15.6px">控制图类型:</div><div class="lbl" style="left:225px;width:200px;text-align:right;top:525px;font-size:15.6px">控制限类型:</div><div class="lbl" style="left:225px;width:200px;text-align:right;top:566px;font-size:15.6px">分组大小:</div><div class="lbl" style="left:225px;width:200px;text-align:right;top:606px;font-size:15.6px">目标值:</div><div class="lbl" style="left:225px;width:200px;text-align:right;top:647px;font-size:15.6px">规格上限:</div><div class="lbl" style="left:225px;width:200px;text-align:right;top:687px;font-size:15.6px">规格下限:</div>
<div class="inp" style="left:433px;top:481px;width:158px;height:27px"></div>
<div class="lbl" style="left:443px;top:484px;font-size:15.6px">单值：移动极差</div>
<div class="dd" style="left:567px;top:488px"></div>
<div class="inp" style="left:433px;top:522px;width:158px;height:27px"></div>
<div class="lbl" style="left:443px;top:525px;font-size:15.6px">上下限</div>
<div class="dd" style="left:567px;top:529px"></div>
<div class="inp" style="left:433px;top:562px;width:102px;height:28px"></div>
<div class="lbl" style="left:443px;top:566px;font-size:15px">1</div>
<div class="inp" style="left:433px;top:602px;width:102px;height:28px"></div>
<div class="inp" style="left:433px;top:643px;width:102px;height:28px"></div>
<div class="inp" style="left:433px;top:683px;width:102px;height:28px"></div>
<!-- DATA FIELDS PANEL -->
<div class="a" style="left:274px;top:735px;width:3px;height:16px;background:#3a5bd9"></div>
<div class="t" style="left:282px;top:735px;font-size:16px;color:#333">数据表字段</div>
<div class="btn" style="left:374px;top:730px;width:27px;height:27px"></div>
<svg class="a" style="left:380px;top:736px" width="15" height="15" viewBox="0 0 15 15" stroke="#fff" stroke-width="1.8"><path d="M7.5 1.5 V13.5 M1.5 7.5 H13.5"/></svg>
<div class="a" style="left:411px;top:730px;width:27px;height:27px;background:#f5f5f5;border:1px solid #dedede;border-radius:2px"></div>
<svg class="a" style="left:416px;top:735px" width="17" height="17" viewBox="0 0 17 17" fill="none" stroke="#c4c4c4" stroke-width="1.2"><path d="M4 12 L5 8.5 L11.5 2 L14 4.5 L7.5 11 Z M2 15 H15"/></svg>
<div class="a" style="left:448px;top:730px;width:27px;height:27px;background:#f5f5f5;border:1px solid #dedede;border-radius:2px"></div>
<svg class="a" style="left:454px;top:736px" width="15" height="16" viewBox="0 0 15 16" fill="none" stroke="#c4c4c4" stroke-width="1.3"><path d="M1.5 3.5 H13.5 M5 3.5 V1.5 H10 V3.5 M3 3.5 L3.8 14.5 H11.2 L12 3.5 M6 6.5 V11.5 M9 6.5 V11.5"/></svg>
<div class="a" style="left:270px;top:763px;width:487px;height:215px;background:linear-gradient(180deg,#f0f0f0 0,#f0f0f0 95%,#f7f7f7 100%)"></div><div class="a" style="left:270px;top:763px;width:487px;height:204px;background:#fff;box-shadow:0 2px 8px rgba(0,0,0,.14)"></div>
<div class="a" style="left:270px;top:763px;width:488px;height:31px;background:#d6e4fc;border-bottom:1px solid #cfdcf3"></div>
<div class="a" style="left:328px;top:763px;width:1px;height:31px;background:#c5d4ee"></div><div class="a" style="left:443px;top:763px;width:1px;height:31px;background:#c5d4ee"></div><div class="a" style="left:617px;top:763px;width:1px;height:31px;background:#c5d4ee"></div><div class="a" style="left:732px;top:763px;width:1px;height:31px;background:#c5d4ee"></div><div class="chk" style="left:280px;top:772px"></div><div class="a" style="left:304px;top:774px;width:6px;height:6px;border-right:1px solid #b8c4dc;border-bottom:1px solid #b8c4dc;transform:rotate(45deg)"></div><div class="th" style="left:338px;top:768px">字段名</div><div class="th" style="left:452px;top:768px">描述</div><div class="th" style="left:626px;top:768px">查询条件</div><div class="a" style="left:270px;top:794px;width:463px;height:149px;overflow:hidden;background:#fff"><div class="a" style="left:0;top:0px;width:463px;height:37px;border-bottom:1px solid #ececec"></div><div class="chk" style="left:19px;top:11px;width:18px;height:18px"></div><div class="blur" style="left:62px;top:15px;width:52px;height:9px;opacity:.55"></div><div class="td" style="left:182px;top:9px">SN号</div><div class="inp" style="left:356px;top:6px;width:120px;height:27px"></div><div class="td" style="left:365px;top:9px">无</div><div class="dd" style="left:444px;top:12px"></div><div class="a" style="left:0;top:37px;width:463px;height:37px;border-bottom:1px solid #ececec"></div><div class="chk" style="left:19px;top:48px;width:18px;height:18px"></div><div class="blur" style="left:62px;top:52px;width:60px;height:9px;opacity:.55"></div><div class="td" style="left:182px;top:46px">作业调度号</div><div class="inp" style="left:356px;top:43px;width:120px;height:27px"></div><div class="td" style="left:365px;top:46px">无</div><div class="dd" style="left:444px;top:49px"></div><div class="a" style="left:0;top:74px;width:463px;height:37px;border-bottom:1px solid #ececec"></div><div class="chk" style="left:19px;top:85px;width:18px;height:18px"></div><div class="blur" style="left:62px;top:89px;width:67px;height:9px;opacity:.55"></div><div class="td" style="left:182px;top:83px">炉号</div><div class="inp" style="left:356px;top:80px;width:120px;height:27px"></div><div class="td" style="left:365px;top:83px">条件1</div><div class="dd" style="left:444px;top:86px"></div><div class="a" style="left:0;top:111px;width:463px;height:37px;border-bottom:1px solid #ececec"></div><div class="chk" style="left:19px;top:122px;width:18px;height:18px"></div><div class="blur" style="left:62px;top:126px;width:92px;height:9px;opacity:.55"></div><div class="td" style="left:182px;top:120px">厂内编码</div><div class="inp" style="left:356px;top:117px;width:120px;height:27px"></div><div class="td" style="left:365px;top:120px">条件2</div><div class="dd" style="left:444px;top:123px"></div><div class="a" style="left:58px;top:0;width:1px;height:149px;background:#ececec"></div><div class="a" style="left:173px;top:0;width:1px;height:149px;background:#ececec"></div><div class="a" style="left:347px;top:0;width:1px;height:149px;background:#ececec"></div></div>
<div class="a" style="left:733px;top:794px;width:25px;height:149px;background:#f1f1f1"></div>
<div class="a" style="left:735px;top:820px;width:21px;height:56px;background:#c1c1c1"></div>
<svg class="a" style="left:739px;top:803px" width="12" height="8" viewBox="0 0 12 8" fill="#a3a3a3"><path d="M0 7 L6 1 L12 7Z"/></svg>
<svg class="a" style="left:739px;top:925px" width="12" height="8" viewBox="0 0 12 8" fill="#505050"><path d="M0 1 L6 7 L12 1Z"/></svg>
<div class="a" style="left:270px;top:943px;width:463px;height:24px;background:#f1f1f1"></div>
<div class="a" style="left:295px;top:945px;width:408px;height:21px;background:#c1c1c1"></div>
<svg class="a" style="left:278px;top:949px" width="8" height="12" viewBox="0 0 8 12" fill="#a3a3a3"><path d="M7 0 L1 6 L7 12Z"/></svg>
<svg class="a" style="left:716px;top:949px" width="8" height="12" viewBox="0 0 8 12" fill="#505050"><path d="M1 0 L7 6 L1 12Z"/></svg>
<div class="a" style="left:733px;top:943px;width:25px;height:24px;background:#dcdcdc"></div>


<!-- CHARTS -->
<div class="a" style="left:761px;top:448px;width:654px;height:358px;background:#fff;border:1px solid #ebebeb"></div>
<div class="a" style="left:761px;top:448px;width:654px;height:47px;background:#f9f9f9;border:1px solid #ebebeb"></div>
<div class="a" style="left:775px;top:465px;width:11px;height:11px;border-radius:50%;background:#3f63dc"></div>
<div class="t" style="left:802px;top:463px;font-size:16.5px;color:#666">单值</div>
<div class="a" style="left:1374px;top:458px;width:27px;height:27px;background:#fff;border:1px solid #e2e2e2;border-radius:2px"></div>
<div class="a" style="left:1424px;top:448px;width:466px;height:358px;background:#fff;border:1px solid #ebebeb"></div>
<div class="a" style="left:1424px;top:448px;width:466px;height:47px;background:#f9f9f9;border:1px solid #ebebeb"></div>
<div class="a" style="left:1439px;top:465px;width:11px;height:11px;border-radius:50%;background:#3f63dc"></div>
<div class="t" style="left:1466px;top:463px;font-size:16.5px;color:#666">直方图</div>
<div class="a" style="left:1848px;top:458px;width:27px;height:27px;background:#fff;border:1px solid #e2e2e2;border-radius:2px"></div>
<div class="a" style="left:761px;top:817px;width:654px;height:200px;background:#fff;border:1px solid #ebebeb"></div>
<div class="a" style="left:761px;top:817px;width:654px;height:47px;background:#f9f9f9;border:1px solid #ebebeb"></div>
<div class="a" style="left:775px;top:835px;width:11px;height:11px;border-radius:50%;background:#3f63dc"></div>
<div class="t" style="left:802px;top:833px;font-size:16.5px;color:#666">移动极差</div>
<div class="a" style="left:1374px;top:828px;width:27px;height:27px;background:#fff;border:1px solid #e2e2e2;border-radius:2px"></div>
<div class="a" style="left:1424px;top:817px;width:466px;height:200px;background:#fff;border:1px solid #ebebeb"></div>
<div class="a" style="left:1424px;top:817px;width:466px;height:47px;background:#f9f9f9;border:1px solid #ebebeb"></div>
<div class="a" style="left:1439px;top:835px;width:11px;height:11px;border-radius:50%;background:#3f63dc"></div>
<div class="t" style="left:1466px;top:833px;font-size:16.5px;color:#666">正态校验图</div>
<div class="a" style="left:1848px;top:828px;width:27px;height:27px;background:#fff;border:1px solid #e2e2e2;border-radius:2px"></div>
<svg class="a" style="left:1380px;top:464px" width="15" height="15" viewBox="0 0 15 15" fill="#111" stroke="#111" stroke-width="1.6"><path d="M2 2 L5.5 5.5 M13 2 L9.5 5.5 M2 13 L5.5 9.5 M13 13 L9.5 9.5" fill="none"/><path d="M1 1 H5 L1 5Z M14 1 V5 L10 1Z M1 14 V10 L5 14Z M14 14 H10 L14 10Z" stroke="none"/></svg><svg class="a" style="left:1854px;top:464px" width="15" height="15" viewBox="0 0 15 15" fill="#111" stroke="#111" stroke-width="1.6"><path d="M2 2 L5.5 5.5 M13 2 L9.5 5.5 M2 13 L5.5 9.5 M13 13 L9.5 9.5" fill="none"/><path d="M1 1 H5 L1 5Z M14 1 V5 L10 1Z M1 14 V10 L5 14Z M14 14 H10 L14 10Z" stroke="none"/></svg><svg class="a" style="left:1380px;top:834px" width="15" height="15" viewBox="0 0 15 15" fill="#111" stroke="#111" stroke-width="1.6"><path d="M2 2 L5.5 5.5 M13 2 L9.5 5.5 M2 13 L5.5 9.5 M13 13 L9.5 9.5" fill="none"/><path d="M1 1 H5 L1 5Z M14 1 V5 L10 1Z M1 14 V10 L5 14Z M14 14 H10 L14 10Z" stroke="none"/></svg><svg class="a" style="left:1854px;top:834px" width="15" height="15" viewBox="0 0 15 15" fill="#111" stroke="#111" stroke-width="1.6"><path d="M2 2 L5.5 5.5 M13 2 L9.5 5.5 M2 13 L5.5 9.5 M13 13 L9.5 9.5" fill="none"/><path d="M1 1 H5 L1 5Z M14 1 V5 L10 1Z M1 14 V10 L5 14Z M14 14 H10 L14 10Z" stroke="none"/></svg><!--C1--><svg class="a" style="left:761px;top:495px" width="654" height="311" viewBox="0 0 654 311">
<line x1="86" y1="47.1" x2="496" y2="47.1" stroke="#e6e8f0" stroke-width="1"/>
<line x1="81" y1="47.1" x2="86" y2="47.1" stroke="#c8c8c8" stroke-width="1"/>
<text x="77" y="52.1" text-anchor="end" font-family="Liberation Sans" font-size="14" fill="#c4c4c4">74.8</text>
<line x1="86" y1="76.1" x2="496" y2="76.1" stroke="#e6e8f0" stroke-width="1"/>
<line x1="81" y1="76.1" x2="86" y2="76.1" stroke="#c8c8c8" stroke-width="1"/>
<text x="77" y="81.1" text-anchor="end" font-family="Liberation Sans" font-size="14" fill="#c4c4c4">60</text>
<line x1="86" y1="115.3" x2="496" y2="115.3" stroke="#e6e8f0" stroke-width="1"/>
<line x1="81" y1="115.3" x2="86" y2="115.3" stroke="#c8c8c8" stroke-width="1"/>
<text x="77" y="120.3" text-anchor="end" font-family="Liberation Sans" font-size="14" fill="#c4c4c4">40</text>
<line x1="86" y1="154.6" x2="496" y2="154.6" stroke="#e6e8f0" stroke-width="1"/>
<line x1="81" y1="154.6" x2="86" y2="154.6" stroke="#c8c8c8" stroke-width="1"/>
<text x="77" y="159.6" text-anchor="end" font-family="Liberation Sans" font-size="14" fill="#c4c4c4">20</text>
<line x1="81" y1="193.8" x2="86" y2="193.8" stroke="#c8c8c8" stroke-width="1"/>
<text x="77" y="198.8" text-anchor="end" font-family="Liberation Sans" font-size="14" fill="#c4c4c4">0</text>
<line x1="81" y1="223.2" x2="86" y2="223.2" stroke="#c8c8c8" stroke-width="1"/>
<text x="77" y="228.2" text-anchor="end" font-family="Liberation Sans" font-size="14" fill="#c4c4c4">-15.01</text>
<circle cx="86" cy="162.5" r="10" fill="#f07070" opacity=".85"/>
<rect x="86" y="182.0" width="410" height="11.8" fill="#e8ecfa"/>
<polyline points="86.0,139.2 86.5,182.3 87.0,167.3 87.5,189.8 88.0,190.4 88.5,193.1 89.0,123.3 89.5,117.7 90.0,137.6 90.5,165.7 91.0,183.6 91.5,171.2 92.0,120.3 92.5,123.6 93.0,108.9 93.5,167.0 94.0,182.8 94.5,192.2 95.0,164.1 95.5,129.0 96.0,170.7 96.5,150.3 97.0,129.3 97.5,141.3 98.0,171.3 98.5,179.9 99.0,125.0 99.5,111.2 100.0,188.6 100.5,156.7 101.0,170.0 101.5,155.6 102.0,162.7 102.5,137.8 103.0,152.1 103.5,188.3 104.0,135.3 104.5,171.4 105.0,127.1 105.5,190.2 106.0,120.3 106.5,187.8 107.0,117.1 107.5,122.3 108.0,190.3 108.5,140.9 109.0,141.9 109.5,133.0 110.0,122.0 110.5,178.3 111.0,117.5 111.5,131.4 112.0,172.6 112.5,190.5 113.0,129.5 113.5,150.7 114.0,154.5 114.5,183.2 115.0,146.2 115.5,145.3 116.0,133.4 116.5,107.6 117.0,193.3 117.5,119.2 118.0,141.6 118.5,192.6 119.0,114.3 119.5,186.9 120.0,178.4 120.5,134.6 121.0,139.9 121.5,135.3 122.0,161.3 122.5,193.0 123.0,136.6 123.5,177.7 124.0,186.3 124.5,178.5 125.0,184.6 125.5,136.0 126.0,150.4 126.5,134.2 127.1,104.2 127.6,146.2 128.1,137.5 128.6,135.7 129.1,144.8 129.6,148.2 130.1,130.6 130.6,142.1 131.1,191.6 131.6,126.5 132.1,163.1 132.6,135.6 133.1,167.4 133.6,137.5 134.1,118.2 134.6,140.0 135.1,161.5 135.6,145.2 136.1,188.6 136.6,146.1 137.1,161.6 137.6,103.8 138.1,123.9 138.6,165.8 139.1,120.5 139.6,177.3 140.1,119.5 140.6,144.8 141.1,102.9 141.6,152.4 142.1,129.9 142.6,122.8 143.1,152.8 143.6,138.3 144.1,122.3 144.6,175.2 145.1,135.9 145.6,129.0 146.1,132.9 146.6,100.9 147.1,132.0 147.6,139.8 148.1,121.2 148.6,158.8 149.1,185.0 149.6,138.5 150.1,187.5 150.6,111.6 151.1,157.6 151.6,130.6 152.1,146.0 152.6,109.4 153.1,136.3 153.6,160.1 154.1,147.2 154.6,163.3 155.1,160.2 155.6,150.6 156.1,158.8 156.6,137.9 157.1,141.2 157.6,172.7 158.1,137.8 158.6,179.0 159.1,112.3 159.6,191.9 160.1,188.5 160.6,140.2 161.1,105.6 161.6,178.7 162.1,136.6 162.6,99.8 163.1,131.3 163.6,143.5 164.1,112.6 164.6,168.7 165.1,115.4 165.6,185.0 166.1,163.5 166.6,191.2 167.1,159.8 167.6,186.1 168.1,136.4 168.6,116.7 169.1,187.7 169.6,139.7 170.1,121.3 170.6,172.8 171.1,100.6 171.6,150.2 172.1,193.3 172.6,164.3 173.1,186.4 173.6,145.1 174.1,187.1 174.6,187.0 175.1,168.7 175.6,138.7 176.1,139.8 176.6,173.8 177.1,119.2 177.6,192.2 178.1,135.6 178.6,171.2 179.1,176.9 179.6,142.4 180.1,142.4 180.6,157.8 181.1,111.5 181.6,180.5 182.1,163.9 182.6,143.4 183.1,130.9 183.6,135.8 184.1,123.2 184.6,153.5 185.1,134.6 185.6,192.8 186.1,188.0 186.6,139.0 187.1,187.2 187.6,151.8 188.1,137.1 188.6,132.0 189.1,112.2 189.6,120.2 190.1,158.1 190.6,120.1 191.1,134.4 191.6,190.8 192.1,160.3 192.6,110.8 193.1,191.7 193.6,190.7 194.1,193.6 194.6,137.3 195.1,159.0 195.6,152.4 196.1,141.1 196.6,135.1 197.1,178.3 197.6,153.1 198.1,187.2 198.6,154.0 199.1,144.5 199.6,110.3 200.1,143.4 200.6,143.8 201.1,140.4 201.6,150.6 202.1,142.1 202.6,114.3 203.1,102.7 203.6,153.9 204.1,151.2 204.6,185.8 205.1,147.8 205.6,158.7 206.1,182.6 206.6,173.1 207.1,191.7 207.6,175.5 208.1,136.2 208.6,166.4 209.2,151.1 209.7,154.5 210.2,182.0 210.7,117.0 211.2,170.4 211.7,185.3 212.2,191.7 212.7,150.6 213.2,171.1 213.7,162.3 214.2,179.9 214.7,175.8 215.2,138.2 215.7,190.2 216.2,136.6 216.7,136.5 217.2,100.0 217.7,108.9 218.2,110.3 218.7,179.2 219.2,160.0 219.7,150.1 220.2,121.7 220.7,184.7 221.2,189.9 221.7,170.6 222.2,114.7 222.7,123.0 223.2,187.9 223.7,179.8 224.2,149.6 224.7,171.2 225.2,133.5 225.7,155.9 226.2,132.7 226.7,141.7 227.2,102.7 227.7,120.8 228.2,136.5 228.7,176.3 229.2,120.3 229.7,144.5 230.2,139.4 230.7,157.9 231.2,183.4 231.7,163.0 232.2,153.1 232.7,141.6 233.2,179.5 233.7,168.4 234.2,125.4 234.7,172.7 235.2,170.6 235.7,165.8 236.2,119.2 236.7,101.0 237.2,174.7 237.7,135.1 238.2,139.5 238.7,121.0 239.2,140.7 239.7,136.7 240.2,140.7 240.7,164.9 241.2,130.5 241.7,134.8 242.2,191.6 242.7,179.5 243.2,153.8 243.7,174.9 244.2,136.9 244.7,132.3 245.2,142.7 245.7,184.8 246.2,188.2 246.7,161.8 247.2,185.9 247.7,121.0 248.2,142.3 248.7,173.3 249.2,119.4 249.7,151.2 250.2,149.1 250.7,146.9 251.2,157.8 251.7,187.7 252.2,121.1 252.7,170.5 253.2,117.0 253.7,150.3 254.2,121.5 254.7,156.2 255.2,137.5 255.7,185.4 256.2,132.0 256.7,153.1 257.2,161.7 257.7,137.0 258.2,150.0 258.7,142.3 259.2,151.6 259.7,136.7 260.2,138.8 260.7,142.0 261.2,132.9 261.7,175.9 262.2,148.3 262.7,175.5 263.2,170.1 263.7,174.2 264.2,124.9 264.7,120.4 265.2,176.4 265.7,133.0 266.2,137.6 266.7,113.5 267.2,99.3 267.7,121.9 268.2,190.7 268.7,140.9 269.2,135.1 269.7,169.2 270.2,100.2 270.7,184.3 271.2,166.6 271.7,135.0 272.2,123.1 272.7,134.5 273.2,179.6 273.7,175.4 274.2,123.5 274.7,163.9 275.2,190.1 275.7,121.2 276.2,114.2 276.7,184.4 277.2,123.7 277.7,183.9 278.2,193.3 278.7,172.8 279.2,140.1 279.7,136.4 280.2,154.5 280.7,125.9 281.2,136.3 281.7,187.9 282.2,153.6 282.7,184.7 283.2,131.6 283.7,137.3 284.2,136.9 284.7,131.2 285.2,176.6 285.7,148.3 286.2,146.5 286.7,169.2 287.2,134.3 287.7,181.9 288.2,104.7 288.7,141.3 289.2,189.5 289.7,119.7 290.2,135.6 290.7,140.8 291.3,189.9 291.8,163.2 292.3,133.0 292.8,151.6 293.3,142.8 293.8,179.8 294.3,171.0 294.8,166.9 295.3,175.8 295.8,137.0 296.3,101.5 296.8,169.3 297.3,119.4 297.8,174.2 298.3,152.6 298.8,180.7 299.3,144.2 299.8,139.3 300.3,191.5 300.8,118.5 301.3,156.2 301.8,167.0 302.3,163.0 302.8,124.5 303.3,180.6 303.8,154.3 304.3,114.1 304.8,118.2 305.3,128.7 305.8,175.6 306.3,191.2 306.8,176.5 307.3,138.0 307.8,158.0 308.3,193.0 308.8,129.8 309.3,181.3 309.8,106.1 310.3,136.1 310.8,120.4 311.3,129.5 311.8,133.0 312.3,135.1 312.8,138.2 313.3,175.6 313.8,186.7 314.3,123.5 314.8,122.0 315.3,177.7 315.8,189.5 316.3,139.5 316.8,188.9 317.3,130.9 317.8,116.2 318.3,138.7 318.8,111.2 319.3,136.6 319.8,120.1 320.3,136.2 320.8,183.2 321.3,166.2 321.8,154.3 322.3,177.8 322.8,174.6 323.3,122.9 323.8,176.6 324.3,113.4 324.8,166.4 325.3,117.1 325.8,140.2 326.3,189.4 326.8,184.0 327.3,179.9 327.8,157.9 328.3,170.3 328.8,129.1 329.3,127.3 329.8,132.5 330.3,188.9 330.8,174.0 331.3,146.2 331.8,176.8 332.3,180.5 332.8,112.6 333.3,190.3 333.8,183.9 334.3,181.8 334.8,146.3 335.3,183.2 335.8,166.7 336.3,179.0 336.8,135.1 337.3,144.4 337.8,99.1 338.3,137.2 338.8,177.5 339.3,138.5 339.8,191.0 340.3,177.9 340.8,171.9 341.3,178.6 341.8,139.0 342.3,116.7 342.8,169.7 343.3,192.4 343.8,100.2 344.3,140.3 344.8,103.9 345.3,110.2 345.8,167.6 346.3,157.6 346.8,140.9 347.3,98.8 347.8,165.8 348.3,172.4 348.8,156.5 349.3,124.8 349.8,138.6 350.3,183.5 350.8,173.0 351.3,135.8 351.8,152.1 352.3,142.8 352.8,192.6 353.3,163.9 353.8,140.3 354.3,117.6 354.8,184.8 355.3,191.0 355.8,114.4 356.3,129.1 356.8,175.5 357.3,161.7 357.8,100.2 358.3,139.3 358.8,188.8 359.3,146.1 359.8,136.6 360.3,188.7 360.8,168.1 361.3,163.3 361.8,148.5 362.3,121.5 362.8,189.6 363.3,137.2 363.8,187.7 364.3,189.5 364.8,178.7 365.3,108.3 365.8,153.2 366.3,177.0 366.8,135.7 367.3,186.8 367.8,149.5 368.3,187.2 368.8,162.2 369.3,162.9 369.8,140.3 370.3,141.9 370.8,125.1 371.3,142.8 371.8,172.4 372.3,163.7 372.8,159.3 373.4,127.7 373.9,174.9 374.4,185.2 374.9,137.2 375.4,137.8 375.9,169.3 376.4,169.2 376.9,121.4 377.4,150.6 377.9,136.0 378.4,143.1 378.9,142.2 379.4,125.7 379.9,170.3 380.4,107.9 380.9,186.7 381.4,122.5 381.9,100.4 382.4,139.5 382.9,193.5 383.4,153.6 383.9,148.4 384.4,189.2 384.9,123.6 385.4,140.5 385.9,187.0 386.4,137.8 386.9,118.1 387.4,122.3 387.9,144.5 388.4,143.9 388.9,171.3 389.4,193.0 389.9,175.5 390.4,132.8 390.9,191.8 391.4,125.9 391.9,135.2 392.4,160.3 392.9,154.4 393.4,190.6 393.9,124.6 394.4,126.2 394.9,174.9 395.4,181.3 395.9,177.3 396.4,192.2 396.9,136.1 397.4,189.9 397.9,145.3 398.4,111.1 398.9,123.2 399.4,120.6 399.9,137.7 400.4,160.5 400.9,107.6 401.4,187.6 401.9,145.8 402.4,167.8 402.9,133.5 403.4,181.6 403.9,184.7 404.4,116.7 404.9,160.4 405.4,122.0 405.9,131.9 406.4,147.5 406.9,153.0 407.4,135.1 407.9,102.5 408.4,148.1 408.9,112.4 409.4,156.4 409.9,111.8 410.4,173.8 410.9,115.8 411.4,142.9 411.9,119.4 412.4,135.1 412.9,177.7 413.4,138.3 413.9,148.8 414.4,99.6 414.9,113.8 415.4,145.4 415.9,163.8 416.4,107.5 416.9,118.1 417.4,142.0 417.9,124.2 418.4,160.4 418.9,162.3 419.4,108.4 419.9,125.4 420.4,164.0 420.9,147.7 421.4,137.4 421.9,141.1 422.4,150.2 422.9,151.3 423.4,162.8 423.9,128.0 424.4,190.5 424.9,149.6 425.4,173.2 425.9,132.1 426.4,165.1 426.9,138.5 427.4,107.1 427.9,166.1 428.4,136.2 428.9,189.5 429.4,104.0 429.9,159.5 430.4,109.1 430.9,149.4 431.4,153.3 431.9,159.3 432.4,120.5 432.9,60.4 433.4,124.8 433.9,99.0 434.4,141.5 434.9,133.4 435.4,190.5 435.9,126.4 436.4,136.6 436.9,125.3 437.4,159.1 437.9,103.5 438.4,137.8 438.9,104.1 439.4,153.6 439.9,157.3 440.4,120.1 440.9,127.8 441.4,144.3 441.9,170.9 442.4,179.6 442.9,167.9 443.4,172.3 443.9,136.8 444.4,138.4 444.9,188.1 445.4,137.0 445.9,131.5 446.4,127.8 446.9,167.5 447.4,142.4 447.9,187.3 448.4,146.0 448.9,102.8 449.4,185.2 449.9,186.3 450.4,173.2 450.9,119.7 451.4,124.5 451.9,139.2 452.4,145.6 452.9,101.3 453.4,146.1 453.9,140.4 454.4,143.2 454.9,106.2 455.5,148.1 456.0,122.0 456.5,172.5 457.0,139.5 457.5,183.0 458.0,178.6 458.5,160.5 459.0,141.9 459.5,187.2 460.0,157.3 460.5,143.1 461.0,132.9 461.5,182.1 462.0,153.5 462.5,189.0 463.0,138.4 463.5,119.7 464.0,161.2 464.5,184.2 465.0,154.1 465.5,122.5 466.0,131.6 466.5,146.7 467.0,112.5 467.5,129.8 468.0,171.0 468.5,165.4 469.0,172.1 469.5,136.2 470.0,145.6 470.5,135.3 471.0,129.0 471.5,146.0 472.0,188.1 472.5,158.1 473.0,191.4 473.5,192.3 474.0,154.9 474.5,145.7 475.0,154.8 475.5,154.0 476.0,155.5 476.5,175.1 477.0,162.6 477.5,180.8 478.0,122.3 478.5,139.3 479.0,167.1 479.5,145.8 480.0,172.8 480.5,132.9 481.0,132.7 481.5,138.3 482.0,189.3 482.5,192.9 483.0,156.6 483.5,163.2 484.0,190.8 484.5,138.1 485.0,161.7 485.5,140.4 486.0,175.1 486.5,122.8 487.0,188.4 487.5,99.5 488.0,187.0 488.5,122.7 489.0,173.6 489.5,176.4 490.0,187.7 490.5,142.3 491.0,181.7 491.5,149.8 492.0,138.4 492.5,120.1 493.0,185.4 493.5,188.7 494.0,181.9 494.5,125.6 495.0,102.1 495.5,182.9 496.0,129.3" fill="none" stroke="#6699ff" stroke-width="2.6"/>
<circle cx="86.0" cy="139.2" r="3.6" fill="#6699ff"/>
<circle cx="86.5" cy="182.3" r="3.6" fill="#6699ff"/>
<circle cx="87.0" cy="167.3" r="3.6" fill="#6699ff"/>
<circle cx="87.5" cy="189.8" r="3.6" fill="#6699ff"/>
<circle cx="88.0" cy="190.4" r="3.6" fill="#6699ff"/>
<circle cx="88.5" cy="193.1" r="3.6" fill="#6699ff"/>
<circle cx="89.0" cy="123.3" r="3.6" fill="#6699ff"/>
<circle cx="89.5" cy="117.7" r="3.6" fill="#6699ff"/>
<circle cx="90.0" cy="137.6" r="3.6" fill="#6699ff"/>
<circle cx="90.5" cy="165.7" r="3.6" fill="#6699ff"/>
<circle cx="91.0" cy="183.6" r="3.6" fill="#6699ff"/>
<circle cx="91.5" cy="171.2" r="3.6" fill="#6699ff"/>
<circle cx="92.0" cy="120.3" r="3.6" fill="#6699ff"/>
<circle cx="92.5" cy="123.6" r="3.6" fill="#6699ff"/>
<circle cx="93.0" cy="108.9" r="3.6" fill="#6699ff"/>
<circle cx="93.5" cy="167.0" r="3.6" fill="#6699ff"/>
<circle cx="94.0" cy="182.8" r="3.6" fill="#6699ff"/>
<circle cx="94.5" cy="192.2" r="3.6" fill="#6699ff"/>
<circle cx="95.0" cy="164.1" r="3.6" fill="#6699ff"/>
<circle cx="95.5" cy="129.0" r="3.6" fill="#6699ff"/>
<circle cx="96.0" cy="170.7" r="3.6" fill="#6699ff"/>
<circle cx="96.5" cy="150.3" r="3.6" fill="#6699ff"/>
<circle cx="97.0" cy="129.3" r="3.6" fill="#6699ff"/>
<circle cx="97.5" cy="141.3" r="3.6" fill="#6699ff"/>
<circle cx="98.0" cy="171.3" r="3.6" fill="#6699ff"/>
<circle cx="98.5" cy="179.9" r="3.6" fill="#6699ff"/>
<circle cx="99.0" cy="125.0" r="3.6" fill="#6699ff"/>
<circle cx="99.5" cy="111.2" r="3.6" fill="#6699ff"/>
<circle cx="100.0" cy="188.6" r="3.6" fill="#6699ff"/>
<circle cx="100.5" cy="156.7" r="3.6" fill="#6699ff"/>
<circle cx="101.0" cy="170.0" r="3.6" fill="#6699ff"/>
<circle cx="101.5" cy="155.6" r="3.6" fill="#6699ff"/>
<circle cx="102.0" cy="162.7" r="3.6" fill="#6699ff"/>
<circle cx="102.5" cy="137.8" r="3.6" fill="#6699ff"/>
<circle cx="103.0" cy="152.1" r="3.6" fill="#6699ff"/>
<circle cx="103.5" cy="188.3" r="3.6" fill="#6699ff"/>
<circle cx="104.0" cy="135.3" r="3.6" fill="#6699ff"/>
<circle cx="104.5" cy="171.4" r="3.6" fill="#6699ff"/>
<circle cx="105.0" cy="127.1" r="3.6" fill="#6699ff"/>
<circle cx="105.5" cy="190.2" r="3.6" fill="#6699ff"/>
<circle cx="106.0" cy="120.3" r="3.6" fill="#6699ff"/>
<circle cx="106.5" cy="187.8" r="3.6" fill="#6699ff"/>
<circle cx="107.0" cy="117.1" r="3.6" fill="#6699ff"/>
<circle cx="107.5" cy="122.3" r="3.6" fill="#6699ff"/>
<circle cx="108.0" cy="190.3" r="3.6" fill="#6699ff"/>
<circle cx="108.5" cy="140.9" r="3.6" fill="#6699ff"/>
<circle cx="109.0" cy="141.9" r="3.6" fill="#6699ff"/>
<circle cx="109.5" cy="133.0" r="3.6" fill="#6699ff"/>
<circle cx="110.0" cy="122.0" r="3.6" fill="#6699ff"/>
<circle cx="110.5" cy="178.3" r="3.6" fill="#6699ff"/>
<circle cx="111.0" cy="117.5" r="3.6" fill="#6699ff"/>
<circle cx="111.5" cy="131.4" r="3.6" fill="#6699ff"/>
<circle cx="112.0" cy="172.6" r="3.6" fill="#6699ff"/>
<circle cx="112.5" cy="190.5" r="3.6" fill="#6699ff"/>
<circle cx="113.0" cy="129.5" r="3.6" fill="#6699ff"/>
<circle cx="113.5" cy="150.7" r="3.6" fill="#6699ff"/>
<circle cx="114.0" cy="154.5" r="3.6" fill="#6699ff"/>
<circle cx="114.5" cy="183.2" r="3.6" fill="#6699ff"/>
<circle cx="115.0" cy="146.2" r="3.6" fill="#6699ff"/>
<circle cx="115.5" cy="145.3" r="3.6" fill="#6699ff"/>
<circle cx="116.0" cy="133.4" r="3.6" fill="#6699ff"/>
<circle cx="116.5" cy="107.6" r="3.6" fill="#6699ff"/>
<circle cx="117.0" cy="193.3" r="3.6" fill="#6699ff"/>
<circle cx="117.5" cy="119.2" r="3.6" fill="#6699ff"/>
<circle cx="118.0" cy="141.6" r="3.6" fill="#6699ff"/>
<circle cx="118.5" cy="192.6" r="3.6" fill="#6699ff"/>
<circle cx="119.0" cy="114.3" r="3.6" fill="#6699ff"/>
<circle cx="119.5" cy="186.9" r="3.6" fill="#6699ff"/>
<circle cx="120.0" cy="178.4" r="3.6" fill="#6699ff"/>
<circle cx="120.5" cy="134.6" r="3.6" fill="#6699ff"/>
<circle cx="121.0" cy="139.9" r="3.6" fill="#6699ff"/>
<circle cx="121.5" cy="135.3" r="3.6" fill="#6699ff"/>
<circle cx="122.0" cy="161.3" r="3.6" fill="#6699ff"/>
<circle cx="122.5" cy="193.0" r="3.6" fill="#6699ff"/>
<circle cx="123.0" cy="136.6" r="3.6" fill="#6699ff"/>
<circle cx="123.5" cy="177.7" r="3.6" fill="#6699ff"/>
<circle cx="124.0" cy="186.3" r="3.6" fill="#6699ff"/>
<circle cx="124.5" cy="178.5" r="3.6" fill="#6699ff"/>
<circle cx="125.0" cy="184.6" r="3.6" fill="#6699ff"/>
<circle cx="125.5" cy="136.0" r="3.6" fill="#6699ff"/>
<circle cx="126.0" cy="150.4" r="3.6" fill="#6699ff"/>
<circle cx="126.5" cy="134.2" r="3.6" fill="#6699ff"/>
<circle cx="127.1" cy="104.2" r="3.6" fill="#6699ff"/>
<circle cx="127.6" cy="146.2" r="3.6" fill="#6699ff"/>
<circle cx="128.1" cy="137.5" r="3.6" fill="#6699ff"/>
<circle cx="128.6" cy="135.7" r="3.6" fill="#6699ff"/>
<circle cx="129.1" cy="144.8" r="3.6" fill="#6699ff"/>
<circle cx="129.6" cy="148.2" r="3.6" fill="#6699ff"/>
<circle cx="130.1" cy="130.6" r="3.6" fill="#6699ff"/>
<circle cx="130.6" cy="142.1" r="3.6" fill="#6699ff"/>
<circle cx="131.1" cy="191.6" r="3.6" fill="#6699ff"/>
<circle cx="131.6" cy="126.5" r="3.6" fill="#6699ff"/>
<circle cx="132.1" cy="163.1" r="3.6" fill="#6699ff"/>
<circle cx="132.6" cy="135.6" r="3.6" fill="#6699ff"/>
<circle cx="133.1" cy="167.4" r="3.6" fill="#6699ff"/>
<circle cx="133.6" cy="137.5" r="3.6" fill="#6699ff"/>
<circle cx="134.1" cy="118.2" r="3.6" fill="#6699ff"/>
<circle cx="134.6" cy="140.0" r="3.6" fill="#6699ff"/>
<circle cx="135.1" cy="161.5" r="3.6" fill="#6699ff"/>
<circle cx="135.6" cy="145.2" r="3.6" fill="#6699ff"/>
<circle cx="136.1" cy="188.6" r="3.6" fill="#6699ff"/>
<circle cx="136.6" cy="146.1" r="3.6" fill="#6699ff"/>
<circle cx="137.1" cy="161.6" r="3.6" fill="#6699ff"/>
<circle cx="137.6" cy="103.8" r="3.6" fill="#6699ff"/>
<circle cx="138.1" cy="123.9" r="3.6" fill="#6699ff"/>
<circle cx="138.6" cy="165.8" r="3.6" fill="#6699ff"/>
<circle cx="139.1" cy="120.5" r="3.6" fill="#6699ff"/>
<circle cx="139.6" cy="177.3" r="3.6" fill="#6699ff"/>
<circle cx="140.1" cy="119.5" r="3.6" fill="#6699ff"/>
<circle cx="140.6" cy="144.8" r="3.6" fill="#6699ff"/>
<circle cx="141.1" cy="102.9" r="3.6" fill="#6699ff"/>
<circle cx="141.6" cy="152.4" r="3.6" fill="#6699ff"/>
<circle cx="142.1" cy="129.9" r="3.6" fill="#6699ff"/>
<circle cx="142.6" cy="122.8" r="3.6" fill="#6699ff"/>
<circle cx="143.1" cy="152.8" r="3.6" fill="#6699ff"/>
<circle cx="143.6" cy="138.3" r="3.6" fill="#6699ff"/>
<circle cx="144.1" cy="122.3" r="3.6" fill="#6699ff"/>
<circle cx="144.6" cy="175.2" r="3.6" fill="#6699ff"/>
<circle cx="145.1" cy="135.9" r="3.6" fill="#6699ff"/>
<circle cx="145.6" cy="129.0" r="3.6" fill="#6699ff"/>
<circle cx="146.1" cy="132.9" r="3.6" fill="#6699ff"/>
<circle cx="146.6" cy="100.9" r="3.6" fill="#6699ff"/>
<circle cx="147.1" cy="132.0" r="3.6" fill="#6699ff"/>
<circle cx="147.6" cy="139.8" r="3.6" fill="#6699ff"/>
<circle cx="148.1" cy="121.2" r="3.6" fill="#6699ff"/>
<circle cx="148.6" cy="158.8" r="3.6" fill="#6699ff"/>
<circle cx="149.1" cy="185.0" r="3.6" fill="#6699ff"/>
<circle cx="149.6" cy="138.5" r="3.6" fill="#6699ff"/>
<circle cx="150.1" cy="187.5" r="3.6" fill="#6699ff"/>
<circle cx="150.6" cy="111.6" r="3.6" fill="#6699ff"/>
<circle cx="151.1" cy="157.6" r="3.6" fill="#6699ff"/>
<circle cx="151.6" cy="130.6" r="3.6" fill="#6699ff"/>
<circle cx="152.1" cy="146.0" r="3.6" fill="#6699ff"/>
<circle cx="152.6" cy="109.4" r="3.6" fill="#6699ff"/>
<circle cx="153.1" cy="136.3" r="3.6" fill="#6699ff"/>
<circle cx="153.6" cy="160.1" r="3.6" fill="#6699ff"/>
<circle cx="154.1" cy="147.2" r="3.6" fill="#6699ff"/>
<circle cx="154.6" cy="163.3" r="3.6" fill="#6699ff"/>
<circle cx="155.1" cy="160.2" r="3.6" fill="#6699ff"/>
<circle cx="155.6" cy="150.6" r="3.6" fill="#6699ff"/>
<circle cx="156.1" cy="158.8" r="3.6" fill="#6699ff"/>
<circle cx="156.6" cy="137.9" r="3.6" fill="#6699ff"/>
<circle cx="157.1" cy="141.2" r="3.6" fill="#6699ff"/>
<circle cx="157.6" cy="172.7" r="3.6" fill="#6699ff"/>
<circle cx="158.1" cy="137.8" r="3.6" fill="#6699ff"/>
<circle cx="158.6" cy="179.0" r="3.6" fill="#6699ff"/>
<circle cx="159.1" cy="112.3" r="3.6" fill="#6699ff"/>
<circle cx="159.6" cy="191.9" r="3.6" fill="#6699ff"/>
<circle cx="160.1" cy="188.5" r="3.6" fill="#6699ff"/>
<circle cx="160.6" cy="140.2" r="3.6" fill="#6699ff"/>
<circle cx="161.1" cy="105.6" r="3.6" fill="#6699ff"/>
<circle cx="161.6" cy="178.7" r="3.6" fill="#6699ff"/>
<circle cx="162.1" cy="136.6" r="3.6" fill="#6699ff"/>
<circle cx="162.6" cy="99.8" r="3.6" fill="#6699ff"/>
<circle cx="163.1" cy="131.3" r="3.6" fill="#6699ff"/>
<circle cx="163.6" cy="143.5" r="3.6" fill="#6699ff"/>
<circle cx="164.1" cy="112.6" r="3.6" fill="#6699ff"/>
<circle cx="164.6" cy="168.7" r="3.6" fill="#6699ff"/>
<circle cx="165.1" cy="115.4" r="3.6" fill="#6699ff"/>
<circle cx="165.6" cy="185.0" r="3.6" fill="#6699ff"/>
<circle cx="166.1" cy="163.5" r="3.6" fill="#6699ff"/>
<circle cx="166.6" cy="191.2" r="3.6" fill="#6699ff"/>
<circle cx="167.1" cy="159.8" r="3.6" fill="#6699ff"/>
<circle cx="167.6" cy="186.1" r="3.6" fill="#6699ff"/>
<circle cx="168.1" cy="136.4" r="3.6" fill="#6699ff"/>
<circle cx="168.6" cy="116.7" r="3.6" fill="#6699ff"/>
<circle cx="169.1" cy="187.7" r="3.6" fill="#6699ff"/>
<circle cx="169.6" cy="139.7" r="3.6" fill="#6699ff"/>
<circle cx="170.1" cy="121.3" r="3.6" fill="#6699ff"/>
<circle cx="170.6" cy="172.8" r="3.6" fill="#6699ff"/>
<circle cx="171.1" cy="100.6" r="3.6" fill="#6699ff"/>
<circle cx="171.6" cy="150.2" r="3.6" fill="#6699ff"/>
<circle cx="172.1" cy="193.3" r="3.6" fill="#6699ff"/>
<circle cx="172.6" cy="164.3" r="3.6" fill="#6699ff"/>
<circle cx="173.1" cy="186.4" r="3.6" fill="#6699ff"/>
<circle cx="173.6" cy="145.1" r="3.6" fill="#6699ff"/>
<circle cx="174.1" cy="187.1" r="3.6" fill="#6699ff"/>
<circle cx="174.6" cy="187.0" r="3.6" fill="#6699ff"/>
<circle cx="175.1" cy="168.7" r="3.6" fill="#6699ff"/>
<circle cx="175.6" cy="138.7" r="3.6" fill="#6699ff"/>
<circle cx="176.1" cy="139.8" r="3.6" fill="#6699ff"/>
<circle cx="176.6" cy="173.8" r="3.6" fill="#6699ff"/>
<circle cx="177.1" cy="119.2" r="3.6" fill="#6699ff"/>
<circle cx="177.6" cy="192.2" r="3.6" fill="#6699ff"/>
<circle cx="178.1" cy="135.6" r="3.6" fill="#6699ff"/>
<circle cx="178.6" cy="171.2" r="3.6" fill="#6699ff"/>
<circle cx="179.1" cy="176.9" r="3.6" fill="#6699ff"/>
<circle cx="179.6" cy="142.4" r="3.6" fill="#6699ff"/>
<circle cx="180.1" cy="142.4" r="3.6" fill="#6699ff"/>
<circle cx="180.6" cy="157.8" r="3.6" fill="#6699ff"/>
<circle cx="181.1" cy="111.5" r="3.6" fill="#6699ff"/>
<circle cx="181.6" cy="180.5" r="3.6" fill="#6699ff"/>
<circle cx="182.1" cy="163.9" r="3.6" fill="#6699ff"/>
<circle cx="182.6" cy="143.4" r="3.6" fill="#6699ff"/>
<circle cx="183.1" cy="130.9" r="3.6" fill="#6699ff"/>
<circle cx="183.6" cy="135.8" r="3.6" fill="#6699ff"/>
<circle cx="184.1" cy="123.2" r="3.6" fill="#6699ff"/>
<circle cx="184.6" cy="153.5" r="3.6" fill="#6699ff"/>
<circle cx="185.1" cy="134.6" r="3.6" fill="#6699ff"/>
<circle cx="185.6" cy="192.8" r="3.6" fill="#6699ff"/>
<circle cx="186.1" cy="188.0" r="3.6" fill="#6699ff"/>
<circle cx="186.6" cy="139.0" r="3.6" fill="#6699ff"/>
<circle cx="187.1" cy="187.2" r="3.6" fill="#6699ff"/>
<circle cx="187.6" cy="151.8" r="3.6" fill="#6699ff"/>
<circle cx="188.1" cy="137.1" r="3.6" fill="#6699ff"/>
<circle cx="188.6" cy="132.0" r="3.6" fill="#6699ff"/>
<circle cx="189.1" cy="112.2" r="3.6" fill="#6699ff"/>
<circle cx="189.6" cy="120.2" r="3.6" fill="#6699ff"/>
<circle cx="190.1" cy="158.1" r="3.6" fill="#6699ff"/>
<circle cx="190.6" cy="120.1" r="3.6" fill="#6699ff"/>
<circle cx="191.1" cy="134.4" r="3.6" fill="#6699ff"/>
<circle cx="191.6" cy="190.8" r="3.6" fill="#6699ff"/>
<circle cx="192.1" cy="160.3" r="3.6" fill="#6699ff"/>
<circle cx="192.6" cy="110.8" r="3.6" fill="#6699ff"/>
<circle cx="193.1" cy="191.7" r="3.6" fill="#6699ff"/>
<circle cx="193.6" cy="190.7" r="3.6" fill="#6699ff"/>
<circle cx="194.1" cy="193.6" r="3.6" fill="#6699ff"/>
<circle cx="194.6" cy="137.3" r="3.6" fill="#6699ff"/>
<circle cx="195.1" cy="159.0" r="3.6" fill="#6699ff"/>
<circle cx="195.6" cy="152.4" r="3.6" fill="#6699ff"/>
<circle cx="196.1" cy="141.1" r="3.6" fill="#6699ff"/>
<circle cx="196.6" cy="135.1" r="3.6" fill="#6699ff"/>
<circle cx="197.1" cy="178.3" r="3.6" fill="#6699ff"/>
<circle cx="197.6" cy="153.1" r="3.6" fill="#6699ff"/>
<circle cx="198.1" cy="187.2" r="3.6" fill="#6699ff"/>
<circle cx="198.6" cy="154.0" r="3.6" fill="#6699ff"/>
<circle cx="199.1" cy="144.5" r="3.6" fill="#6699ff"/>
<circle cx="199.6" cy="110.3" r="3.6" fill="#6699ff"/>
<circle cx="200.1" cy="143.4" r="3.6" fill="#6699ff"/>
<circle cx="200.6" cy="143.8" r="3.6" fill="#6699ff"/>
<circle cx="201.1" cy="140.4" r="3.6" fill="#6699ff"/>
<circle cx="201.6" cy="150.6" r="3.6" fill="#6699ff"/>
<circle cx="202.1" cy="142.1" r="3.6" fill="#6699ff"/>
<circle cx="202.6" cy="114.3" r="3.6" fill="#6699ff"/>
<circle cx="203.1" cy="102.7" r="3.6" fill="#6699ff"/>
<circle cx="203.6" cy="153.9" r="3.6" fill="#6699ff"/>
<circle cx="204.1" cy="151.2" r="3.6" fill="#6699ff"/>
<circle cx="204.6" cy="185.8" r="3.6" fill="#6699ff"/>
<circle cx="205.1" cy="147.8" r="3.6" fill="#6699ff"/>
<circle cx="205.6" cy="158.7" r="3.6" fill="#6699ff"/>
<circle cx="206.1" cy="182.6" r="3.6" fill="#6699ff"/>
<circle cx="206.6" cy="173.1" r="3.6" fill="#6699ff"/>
<circle cx="207.1" cy="191.7" r="3.6" fill="#6699ff"/>
<circle cx="207.6" cy="175.5" r="3.6" fill="#6699ff"/>
<circle cx="208.1" cy="136.2" r="3.6" fill="#6699ff"/>
<circle cx="208.6" cy="166.4" r="3.6" fill="#6699ff"/>
<circle cx="209.2" cy="151.1" r="3.6" fill="#6699ff"/>
<circle cx="209.7" cy="154.5" r="3.6" fill="#6699ff"/>
<circle cx="210.2" cy="182.0" r="3.6" fill="#6699ff"/>
<circle cx="210.7" cy="117.0" r="3.6" fill="#6699ff"/>
<circle cx="211.2" cy="170.4" r="3.6" fill="#6699ff"/>
<circle cx="211.7" cy="185.3" r="3.6" fill="#6699ff"/>
<circle cx="212.2" cy="191.7" r="3.6" fill="#6699ff"/>
<circle cx="212.7" cy="150.6" r="3.6" fill="#6699ff"/>
<circle cx="213.2" cy="171.1" r="3.6" fill="#6699ff"/>
<circle cx="213.7" cy="162.3" r="3.6" fill="#6699ff"/>
<circle cx="214.2" cy="179.9" r="3.6" fill="#6699ff"/>
<circle cx="214.7" cy="175.8" r="3.6" fill="#6699ff"/>
<circle cx="215.2" cy="138.2" r="3.6" fill="#6699ff"/>
<circle cx="215.7" cy="190.2" r="3.6" fill="#6699ff"/>
<circle cx="216.2" cy="136.6" r="3.6" fill="#6699ff"/>
<circle cx="216.7" cy="136.5" r="3.6" fill="#6699ff"/>
<circle cx="217.2" cy="100.0" r="3.6" fill="#6699ff"/>
<circle cx="217.7" cy="108.9" r="3.6" fill="#6699ff"/>
<circle cx="218.2" cy="110.3" r="3.6" fill="#6699ff"/>
<circle cx="218.7" cy="179.2" r="3.6" fill="#6699ff"/>
<circle cx="219.2" cy="160.0" r="3.6" fill="#6699ff"/>
<circle cx="219.7" cy="150.1" r="3.6" fill="#6699ff"/>
<circle cx="220.2" cy="121.7" r="3.6" fill="#6699ff"/>
<circle cx="220.7" cy="184.7" r="3.6" fill="#6699ff"/>
<circle cx="221.2" cy="189.9" r="3.6" fill="#6699ff"/>
<circle cx="221.7" cy="170.6" r="3.6" fill="#6699ff"/>
<circle cx="222.2" cy="114.7" r="3.6" fill="#6699ff"/>
<circle cx="222.7" cy="123.0" r="3.6" fill="#6699ff"/>
<circle cx="223.2" cy="187.9" r="3.6" fill="#6699ff"/>
<circle cx="223.7" cy="179.8" r="3.6" fill="#6699ff"/>
<circle cx="224.2" cy="149.6" r="3.6" fill="#6699ff"/>
<circle cx="224.7" cy="171.2" r="3.6" fill="#6699ff"/>
<circle cx="225.2" cy="133.5" r="3.6" fill="#6699ff"/>
<circle cx="225.7" cy="155.9" r="3.6" fill="#6699ff"/>
<circle cx="226.2" cy="132.7" r="3.6" fill="#6699ff"/>
<circle cx="226.7" cy="141.7" r="3.6" fill="#6699ff"/>
<circle cx="227.2" cy="102.7" r="3.6" fill="#6699ff"/>
<circle cx="227.7" cy="120.8" r="3.6" fill="#6699ff"/>
<circle cx="228.2" cy="136.5" r="3.6" fill="#6699ff"/>
<circle cx="228.7" cy="176.3" r="3.6" fill="#6699ff"/>
<circle cx="229.2" cy="120.3" r="3.6" fill="#6699ff"/>
<circle cx="229.7" cy="144.5" r="3.6" fill="#6699ff"/>
<circle cx="230.2" cy="139.4" r="3.6" fill="#6699ff"/>
<circle cx="230.7" cy="157.9" r="3.6" fill="#6699ff"/>
<circle cx="231.2" cy="183.4" r="3.6" fill="#6699ff"/>
<circle cx="231.7" cy="163.0" r="3.6" fill="#6699ff"/>
<circle cx="232.2" cy="153.1" r="3.6" fill="#6699ff"/>
<circle cx="232.7" cy="141.6" r="3.6" fill="#6699ff"/>
<circle cx="233.2" cy="179.5" r="3.6" fill="#6699ff"/>
<circle cx="233.7" cy="168.4" r="3.6" fill="#6699ff"/>
<circle cx="234.2" cy="125.4" r="3.6" fill="#6699ff"/>
<circle cx="234.7" cy="172.7" r="3.6" fill="#6699ff"/>
<circle cx="235.2" cy="170.6" r="3.6" fill="#6699ff"/>
<circle cx="235.7" cy="165.8" r="3.6" fill="#6699ff"/>
<circle cx="236.2" cy="119.2" r="3.6" fill="#6699ff"/>
<circle cx="236.7" cy="101.0" r="3.6" fill="#6699ff"/>
<circle cx="237.2" cy="174.7" r="3.6" fill="#6699ff"/>
<circle cx="237.7" cy="135.1" r="3.6" fill="#6699ff"/>
<circle cx="238.2" cy="139.5" r="3.6" fill="#6699ff"/>
<circle cx="238.7" cy="121.0" r="3.6" fill="#6699ff"/>
<circle cx="239.2" cy="140.7" r="3.6" fill="#6699ff"/>
<circle cx="239.7" cy="136.7" r="3.6" fill="#6699ff"/>
<circle cx="240.2" cy="140.7" r="3.6" fill="#6699ff"/>
<circle cx="240.7" cy="164.9" r="3.6" fill="#6699ff"/>
<circle cx="241.2" cy="130.5" r="3.6" fill="#6699ff"/>
<circle cx="241.7" cy="134.8" r="3.6" fill="#6699ff"/>
<circle cx="242.2" cy="191.6" r="3.6" fill="#6699ff"/>
<circle cx="242.7" cy="179.5" r="3.6" fill="#6699ff"/>
<circle cx="243.2" cy="153.8" r="3.6" fill="#6699ff"/>
<circle cx="243.7" cy="174.9" r="3.6" fill="#6699ff"/>
<circle cx="244.2" cy="136.9" r="3.6" fill="#6699ff"/>
<circle cx="244.7" cy="132.3" r="3.6" fill="#6699ff"/>
<circle cx="245.2" cy="142.7" r="3.6" fill="#6699ff"/>
<circle cx="245.7" cy="184.8" r="3.6" fill="#6699ff"/>
<circle cx="246.2" cy="188.2" r="3.6" fill="#6699ff"/>
<circle cx="246.7" cy="161.8" r="3.6" fill="#6699ff"/>
<circle cx="247.2" cy="185.9" r="3.6" fill="#6699ff"/>
<circle cx="247.7" cy="121.0" r="3.6" fill="#6699ff"/>
<circle cx="248.2" cy="142.3" r="3.6" fill="#6699ff"/>
<circle cx="248.7" cy="173.3" r="3.6" fill="#6699ff"/>
<circle cx="249.2" cy="119.4" r="3.6" fill="#6699ff"/>
<circle cx="249.7" cy="151.2" r="3.6" fill="#6699ff"/>
<circle cx="250.2" cy="149.1" r="3.6" fill="#6699ff"/>
<circle cx="250.7" cy="146.9" r="3.6" fill="#6699ff"/>
<circle cx="251.2" cy="157.8" r="3.6" fill="#6699ff"/>
<circle cx="251.7" cy="187.7" r="3.6" fill="#6699ff"/>
<circle cx="252.2" cy="121.1" r="3.6" fill="#6699ff"/>
<circle cx="252.7" cy="170.5" r="3.6" fill="#6699ff"/>
<circle cx="253.2" cy="117.0" r="3.6" fill="#6699ff"/>
<circle cx="253.7" cy="150.3" r="3.6" fill="#6699ff"/>
<circle cx="254.2" cy="121.5" r="3.6" fill="#6699ff"/>
<circle cx="254.7" cy="156.2" r="3.6" fill="#6699ff"/>
<circle cx="255.2" cy="137.5" r="3.6" fill="#6699ff"/>
<circle cx="255.7" cy="185.4" r="3.6" fill="#6699ff"/>
<circle cx="256.2" cy="132.0" r="3.6" fill="#6699ff"/>
<circle cx="256.7" cy="153.1" r="3.6" fill="#6699ff"/>
<circle cx="257.2" cy="161.7" r="3.6" fill="#6699ff"/>
<circle cx="257.7" cy="137.0" r="3.6" fill="#6699ff"/>
<circle cx="258.2" cy="150.0" r="3.6" fill="#6699ff"/>
<circle cx="258.7" cy="142.3" r="3.6" fill="#6699ff"/>
<circle cx="259.2" cy="151.6" r="3.6" fill="#6699ff"/>
<circle cx="259.7" cy="136.7" r="3.6" fill="#6699ff"/>
<circle cx="260.2" cy="138.8" r="3.6" fill="#6699ff"/>
<circle cx="260.7" cy="142.0" r="3.6" fill="#6699ff"/>
<circle cx="261.2" cy="132.9" r="3.6" fill="#6699ff"/>
<circle cx="261.7" cy="175.9" r="3.6" fill="#6699ff"/>
<circle cx="262.2" cy="148.3" r="3.6" fill="#6699ff"/>
<circle cx="262.7" cy="175.5" r="3.6" fill="#6699ff"/>
<circle cx="263.2" cy="170.1" r="3.6" fill="#6699ff"/>
<circle cx="263.7" cy="174.2" r="3.6" fill="#6699ff"/>
<circle cx="264.2" cy="124.9" r="3.6" fill="#6699ff"/>
<circle cx="264.7" cy="120.4" r="3.6" fill="#6699ff"/>
<circle cx="265.2" cy="176.4" r="3.6" fill="#6699ff"/>
<circle cx="265.7" cy="133.0" r="3.6" fill="#6699ff"/>
<circle cx="266.2" cy="137.6" r="3.6" fill="#6699ff"/>
<circle cx="266.7" cy="113.5" r="3.6" fill="#6699ff"/>
<circle cx="267.2" cy="99.3" r="3.6" fill="#6699ff"/>
<circle cx="267.7" cy="121.9" r="3.6" fill="#6699ff"/>
<circle cx="268.2" cy="190.7" r="3.6" fill="#6699ff"/>
<circle cx="268.7" cy="140.9" r="3.6" fill="#6699ff"/>
<circle cx="269.2" cy="135.1" r="3.6" fill="#6699ff"/>
<circle cx="269.7" cy="169.2" r="3.6" fill="#6699ff"/>
<circle cx="270.2" cy="100.2" r="3.6" fill="#6699ff"/>
<circle cx="270.7" cy="184.3" r="3.6" fill="#6699ff"/>
<circle cx="271.2" cy="166.6" r="3.6" fill="#6699ff"/>
<circle cx="271.7" cy="135.0" r="3.6" fill="#6699ff"/>
<circle cx="272.2" cy="123.1" r="3.6" fill="#6699ff"/>
<circle cx="272.7" cy="134.5" r="3.6" fill="#6699ff"/>
<circle cx="273.2" cy="179.6" r="3.6" fill="#6699ff"/>
<circle cx="273.7" cy="175.4" r="3.6" fill="#6699ff"/>
<circle cx="274.2" cy="123.5" r="3.6" fill="#6699ff"/>
<circle cx="274.7" cy="163.9" r="3.6" fill="#6699ff"/>
<circle cx="275.2" cy="190.1" r="3.6" fill="#6699ff"/>
<circle cx="275.7" cy="121.2" r="3.6" fill="#6699ff"/>
<circle cx="276.2" cy="114.2" r="3.6" fill="#6699ff"/>
<circle cx="276.7" cy="184.4" r="3.6" fill="#6699ff"/>
<circle cx="277.2" cy="123.7" r="3.6" fill="#6699ff"/>
<circle cx="277.7" cy="183.9" r="3.6" fill="#6699ff"/>
<circle cx="278.2" cy="193.3" r="3.6" fill="#6699ff"/>
<circle cx="278.7" cy="172.8" r="3.6" fill="#6699ff"/>
<circle cx="279.2" cy="140.1" r="3.6" fill="#6699ff"/>
<circle cx="279.7" cy="136.4" r="3.6" fill="#6699ff"/>
<circle cx="280.2" cy="154.5" r="3.6" fill="#6699ff"/>
<circle cx="280.7" cy="125.9" r="3.6" fill="#6699ff"/>
<circle cx="281.2" cy="136.3" r="3.6" fill="#6699ff"/>
<circle cx="281.7" cy="187.9" r="3.6" fill="#6699ff"/>
<circle cx="282.2" cy="153.6" r="3.6" fill="#6699ff"/>
<circle cx="282.7" cy="184.7" r="3.6" fill="#6699ff"/>
<circle cx="283.2" cy="131.6" r="3.6" fill="#6699ff"/>
<circle cx="283.7" cy="137.3" r="3.6" fill="#6699ff"/>
<circle cx="284.2" cy="136.9" r="3.6" fill="#6699ff"/>
<circle cx="284.7" cy="131.2" r="3.6" fill="#6699ff"/>
<circle cx="285.2" cy="176.6" r="3.6" fill="#6699ff"/>
<circle cx="285.7" cy="148.3" r="3.6" fill="#6699ff"/>
<circle cx="286.2" cy="146.5" r="3.6" fill="#6699ff"/>
<circle cx="286.7" cy="169.2" r="3.6" fill="#6699ff"/>
<circle cx="287.2" cy="134.3" r="3.6" fill="#6699ff"/>
<circle cx="287.7" cy="181.9" r="3.6" fill="#6699ff"/>
<circle cx="288.2" cy="104.7" r="3.6" fill="#6699ff"/>
<circle cx="288.7" cy="141.3" r="3.6" fill="#6699ff"/>
<circle cx="289.2" cy="189.5" r="3.6" fill="#6699ff"/>
<circle cx="289.7" cy="119.7" r="3.6" fill="#6699ff"/>
<circle cx="290.2" cy="135.6" r="3.6" fill="#6699ff"/>
<circle cx="290.7" cy="140.8" r="3.6" fill="#6699ff"/>
<circle cx="291.3" cy="189.9" r="3.6" fill="#6699ff"/>
<circle cx="291.8" cy="163.2" r="3.6" fill="#6699ff"/>
<circle cx="292.3" cy="133.0" r="3.6" fill="#6699ff"/>
<circle cx="292.8" cy="151.6" r="3.6" fill="#6699ff"/>
<circle cx="293.3" cy="142.8" r="3.6" fill="#6699ff"/>
<circle cx="293.8" cy="179.8" r="3.6" fill="#6699ff"/>
<circle cx="294.3" cy="171.0" r="3.6" fill="#6699ff"/>
<circle cx="294.8" cy="166.9" r="3.6" fill="#6699ff"/>
<circle cx="295.3" cy="175.8" r="3.6" fill="#6699ff"/>
<circle cx="295.8" cy="137.0" r="3.6" fill="#6699ff"/>
<circle cx="296.3" cy="101.5" r="3.6" fill="#6699ff"/>
<circle cx="296.8" cy="169.3" r="3.6" fill="#6699ff"/>
<circle cx="297.3" cy="119.4" r="3.6" fill="#6699ff"/>
<circle cx="297.8" cy="174.2" r="3.6" fill="#6699ff"/>
<circle cx="298.3" cy="152.6" r="3.6" fill="#6699ff"/>
<circle cx="298.8" cy="180.7" r="3.6" fill="#6699ff"/>
<circle cx="299.3" cy="144.2" r="3.6" fill="#6699ff"/>
<circle cx="299.8" cy="139.3" r="3.6" fill="#6699ff"/>
<circle cx="300.3" cy="191.5" r="3.6" fill="#6699ff"/>
<circle cx="300.8" cy="118.5" r="3.6" fill="#6699ff"/>
<circle cx="301.3" cy="156.2" r="3.6" fill="#6699ff"/>
<circle cx="301.8" cy="167.0" r="3.6" fill="#6699ff"/>
<circle cx="302.3" cy="163.0" r="3.6" fill="#6699ff"/>
<circle cx="302.8" cy="124.5" r="3.6" fill="#6699ff"/>
<circle cx="303.3" cy="180.6" r="3.6" fill="#6699ff"/>
<circle cx="303.8" cy="154.3" r="3.6" fill="#6699ff"/>
<circle cx="304.3" cy="114.1" r="3.6" fill="#6699ff"/>
<circle cx="304.8" cy="118.2" r="3.6" fill="#6699ff"/>
<circle cx="305.3" cy="128.7" r="3.6" fill="#6699ff"/>
<circle cx="305.8" cy="175.6" r="3.6" fill="#6699ff"/>
<circle cx="306.3" cy="191.2" r="3.6" fill="#6699ff"/>
<circle cx="306.8" cy="176.5" r="3.6" fill="#6699ff"/>
<circle cx="307.3" cy="138.0" r="3.6" fill="#6699ff"/>
<circle cx="307.8" cy="158.0" r="3.6" fill="#6699ff"/>
<circle cx="308.3" cy="193.0" r="3.6" fill="#6699ff"/>
<circle cx="308.8" cy="129.8" r="3.6" fill="#6699ff"/>
<circle cx="309.3" cy="181.3" r="3.6" fill="#6699ff"/>
<circle cx="309.8" cy="106.1" r="3.6" fill="#6699ff"/>
<circle cx="310.3" cy="136.1" r="3.6" fill="#6699ff"/>
<circle cx="310.8" cy="120.4" r="3.6" fill="#6699ff"/>
<circle cx="311.3" cy="129.5" r="3.6" fill="#6699ff"/>
<circle cx="311.8" cy="133.0" r="3.6" fill="#6699ff"/>
<circle cx="312.3" cy="135.1" r="3.6" fill="#6699ff"/>
<circle cx="312.8" cy="138.2" r="3.6" fill="#6699ff"/>
<circle cx="313.3" cy="175.6" r="3.6" fill="#6699ff"/>
<circle cx="313.8" cy="186.7" r="3.6" fill="#6699ff"/>
<circle cx="314.3" cy="123.5" r="3.6" fill="#6699ff"/>
<circle cx="314.8" cy="122.0" r="3.6" fill="#6699ff"/>
<circle cx="315.3" cy="177.7" r="3.6" fill="#6699ff"/>
<circle cx="315.8" cy="189.5" r="3.6" fill="#6699ff"/>
<circle cx="316.3" cy="139.5" r="3.6" fill="#6699ff"/>
<circle cx="316.8" cy="188.9" r="3.6" fill="#6699ff"/>
<circle cx="317.3" cy="130.9" r="3.6" fill="#6699ff"/>
<circle cx="317.8" cy="116.2" r="3.6" fill="#6699ff"/>
<circle cx="318.3" cy="138.7" r="3.6" fill="#6699ff"/>
<circle cx="318.8" cy="111.2" r="3.6" fill="#6699ff"/>
<circle cx="319.3" cy="136.6" r="3.6" fill="#6699ff"/>
<circle cx="319.8" cy="120.1" r="3.6" fill="#6699ff"/>
<circle cx="320.3" cy="136.2" r="3.6" fill="#6699ff"/>
<circle cx="320.8" cy="183.2" r="3.6" fill="#6699ff"/>
<circle cx="321.3" cy="166.2" r="3.6" fill="#6699ff"/>
<circle cx="321.8" cy="154.3" r="3.6" fill="#6699ff"/>
<circle cx="322.3" cy="177.8" r="3.6" fill="#6699ff"/>
<circle cx="322.8" cy="174.6" r="3.6" fill="#6699ff"/>
<circle cx="323.3" cy="122.9" r="3.6" fill="#6699ff"/>
<circle cx="323.8" cy="176.6" r="3.6" fill="#6699ff"/>
<circle cx="324.3" cy="113.4" r="3.6" fill="#6699ff"/>
<circle cx="324.8" cy="166.4" r="3.6" fill="#6699ff"/>
<circle cx="325.3" cy="117.1" r="3.6" fill="#6699ff"/>
<circle cx="325.8" cy="140.2" r="3.6" fill="#6699ff"/>
<circle cx="326.3" cy="189.4" r="3.6" fill="#6699ff"/>
<circle cx="326.8" cy="184.0" r="3.6" fill="#6699ff"/>
<circle cx="327.3" cy="179.9" r="3.6" fill="#6699ff"/>
<circle cx="327.8" cy="157.9" r="3.6" fill="#6699ff"/>
<circle cx="328.3" cy="170.3" r="3.6" fill="#6699ff"/>
<circle cx="328.8" cy="129.1" r="3.6" fill="#6699ff"/>
<circle cx="329.3" cy="127.3" r="3.6" fill="#6699ff"/>
<circle cx="329.8" cy="132.5" r="3.6" fill="#6699ff"/>
<circle cx="330.3" cy="188.9" r="3.6" fill="#6699ff"/>
<circle cx="330.8" cy="174.0" r="3.6" fill="#6699ff"/>
<circle cx="331.3" cy="146.2" r="3.6" fill="#6699ff"/>
<circle cx="331.8" cy="176.8" r="3.6" fill="#6699ff"/>
<circle cx="332.3" cy="180.5" r="3.6" fill="#6699ff"/>
<circle cx="332.8" cy="112.6" r="3.6" fill="#6699ff"/>
<circle cx="333.3" cy="190.3" r="3.6" fill="#6699ff"/>
<circle cx="333.8" cy="183.9" r="3.6" fill="#6699ff"/>
<circle cx="334.3" cy="181.8" r="3.6" fill="#6699ff"/>
<circle cx="334.8" cy="146.3" r="3.6" fill="#6699ff"/>
<circle cx="335.3" cy="183.2" r="3.6" fill="#6699ff"/>
<circle cx="335.8" cy="166.7" r="3.6" fill="#6699ff"/>
<circle cx="336.3" cy="179.0" r="3.6" fill="#6699ff"/>
<circle cx="336.8" cy="135.1" r="3.6" fill="#6699ff"/>
<circle cx="337.3" cy="144.4" r="3.6" fill="#6699ff"/>
<circle cx="337.8" cy="99.1" r="3.6" fill="#6699ff"/>
<circle cx="338.3" cy="137.2" r="3.6" fill="#6699ff"/>
<circle cx="338.8" cy="177.5" r="3.6" fill="#6699ff"/>
<circle cx="339.3" cy="138.5" r="3.6" fill="#6699ff"/>
<circle cx="339.8" cy="191.0" r="3.6" fill="#6699ff"/>
<circle cx="340.3" cy="177.9" r="3.6" fill="#6699ff"/>
<circle cx="340.8" cy="171.9" r="3.6" fill="#6699ff"/>
<circle cx="341.3" cy="178.6" r="3.6" fill="#6699ff"/>
<circle cx="341.8" cy="139.0" r="3.6" fill="#6699ff"/>
<circle cx="342.3" cy="116.7" r="3.6" fill="#6699ff"/>
<circle cx="342.8" cy="169.7" r="3.6" fill="#6699ff"/>
<circle cx="343.3" cy="192.4" r="3.6" fill="#6699ff"/>
<circle cx="343.8" cy="100.2" r="3.6" fill="#6699ff"/>
<circle cx="344.3" cy="140.3" r="3.6" fill="#6699ff"/>
<circle cx="344.8" cy="103.9" r="3.6" fill="#6699ff"/>
<circle cx="345.3" cy="110.2" r="3.6" fill="#6699ff"/>
<circle cx="345.8" cy="167.6" r="3.6" fill="#6699ff"/>
<circle cx="346.3" cy="157.6" r="3.6" fill="#6699ff"/>
<circle cx="346.8" cy="140.9" r="3.6" fill="#6699ff"/>
<circle cx="347.3" cy="98.8" r="3.6" fill="#6699ff"/>
<circle cx="347.8" cy="165.8" r="3.6" fill="#6699ff"/>
<circle cx="348.3" cy="172.4" r="3.6" fill="#6699ff"/>
<circle cx="348.8" cy="156.5" r="3.6" fill="#6699ff"/>
<circle cx="349.3" cy="124.8" r="3.6" fill="#6699ff"/>
<circle cx="349.8" cy="138.6" r="3.6" fill="#6699ff"/>
<circle cx="350.3" cy="183.5" r="3.6" fill="#6699ff"/>
<circle cx="350.8" cy="173.0" r="3.6" fill="#6699ff"/>
<circle cx="351.3" cy="135.8" r="3.6" fill="#6699ff"/>
<circle cx="351.8" cy="152.1" r="3.6" fill="#6699ff"/>
<circle cx="352.3" cy="142.8" r="3.6" fill="#6699ff"/>
<circle cx="352.8" cy="192.6" r="3.6" fill="#6699ff"/>
<circle cx="353.3" cy="163.9" r="3.6" fill="#6699ff"/>
<circle cx="353.8" cy="140.3" r="3.6" fill="#6699ff"/>
<circle cx="354.3" cy="117.6" r="3.6" fill="#6699ff"/>
<circle cx="354.8" cy="184.8" r="3.6" fill="#6699ff"/>
<circle cx="355.3" cy="191.0" r="3.6" fill="#6699ff"/>
<circle cx="355.8" cy="114.4" r="3.6" fill="#6699ff"/>
<circle cx="356.3" cy="129.1" r="3.6" fill="#6699ff"/>
<circle cx="356.8" cy="175.5" r="3.6" fill="#6699ff"/>
<circle cx="357.3" cy="161.7" r="3.6" fill="#6699ff"/>
<circle cx="357.8" cy="100.2" r="3.6" fill="#6699ff"/>
<circle cx="358.3" cy="139.3" r="3.6" fill="#6699ff"/>
<circle cx="358.8" cy="188.8" r="3.6" fill="#6699ff"/>
<circle cx="359.3" cy="146.1" r="3.6" fill="#6699ff"/>
<circle cx="359.8" cy="136.6" r="3.6" fill="#6699ff"/>
<circle cx="360.3" cy="188.7" r="3.6" fill="#6699ff"/>
<circle cx="360.8" cy="168.1" r="3.6" fill="#6699ff"/>
<circle cx="361.3" cy="163.3" r="3.6" fill="#6699ff"/>
<circle cx="361.8" cy="148.5" r="3.6" fill="#6699ff"/>
<circle cx="362.3" cy="121.5" r="3.6" fill="#6699ff"/>
<circle cx="362.8" cy="189.6" r="3.6" fill="#6699ff"/>
<circle cx="363.3" cy="137.2" r="3.6" fill="#6699ff"/>
<circle cx="363.8" cy="187.7" r="3.6" fill="#6699ff"/>
<circle cx="364.3" cy="189.5" r="3.6" fill="#6699ff"/>
<circle cx="364.8" cy="178.7" r="3.6" fill="#6699ff"/>
<circle cx="365.3" cy="108.3" r="3.6" fill="#6699ff"/>
<circle cx="365.8" cy="153.2" r="3.6" fill="#6699ff"/>
<circle cx="366.3" cy="177.0" r="3.6" fill="#6699ff"/>
<circle cx="366.8" cy="135.7" r="3.6" fill="#6699ff"/>
<circle cx="367.3" cy="186.8" r="3.6" fill="#6699ff"/>
<circle cx="367.8" cy="149.5" r="3.6" fill="#6699ff"/>
<circle cx="368.3" cy="187.2" r="3.6" fill="#6699ff"/>
<circle cx="368.8" cy="162.2" r="3.6" fill="#6699ff"/>
<circle cx="369.3" cy="162.9" r="3.6" fill="#6699ff"/>
<circle cx="369.8" cy="140.3" r="3.6" fill="#6699ff"/>
<circle cx="370.3" cy="141.9" r="3.6" fill="#6699ff"/>
<circle cx="370.8" cy="125.1" r="3.6" fill="#6699ff"/>
<circle cx="371.3" cy="142.8" r="3.6" fill="#6699ff"/>
<circle cx="371.8" cy="172.4" r="3.6" fill="#6699ff"/>
<circle cx="372.3" cy="163.7" r="3.6" fill="#6699ff"/>
<circle cx="372.8" cy="159.3" r="3.6" fill="#6699ff"/>
<circle cx="373.4" cy="127.7" r="3.6" fill="#6699ff"/>
<circle cx="373.9" cy="174.9" r="3.6" fill="#6699ff"/>
<circle cx="374.4" cy="185.2" r="3.6" fill="#6699ff"/>
<circle cx="374.9" cy="137.2" r="3.6" fill="#6699ff"/>
<circle cx="375.4" cy="137.8" r="3.6" fill="#6699ff"/>
<circle cx="375.9" cy="169.3" r="3.6" fill="#6699ff"/>
<circle cx="376.4" cy="169.2" r="3.6" fill="#6699ff"/>
<circle cx="376.9" cy="121.4" r="3.6" fill="#6699ff"/>
<circle cx="377.4" cy="150.6" r="3.6" fill="#6699ff"/>
<circle cx="377.9" cy="136.0" r="3.6" fill="#6699ff"/>
<circle cx="378.4" cy="143.1" r="3.6" fill="#6699ff"/>
<circle cx="378.9" cy="142.2" r="3.6" fill="#6699ff"/>
<circle cx="379.4" cy="125.7" r="3.6" fill="#6699ff"/>
<circle cx="379.9" cy="170.3" r="3.6" fill="#6699ff"/>
<circle cx="380.4" cy="107.9" r="3.6" fill="#6699ff"/>
<circle cx="380.9" cy="186.7" r="3.6" fill="#6699ff"/>
<circle cx="381.4" cy="122.5" r="3.6" fill="#6699ff"/>
<circle cx="381.9" cy="100.4" r="3.6" fill="#6699ff"/>
<circle cx="382.4" cy="139.5" r="3.6" fill="#6699ff"/>
<circle cx="382.9" cy="193.5" r="3.6" fill="#6699ff"/>
<circle cx="383.4" cy="153.6" r="3.6" fill="#6699ff"/>
<circle cx="383.9" cy="148.4" r="3.6" fill="#6699ff"/>
<circle cx="384.4" cy="189.2" r="3.6" fill="#6699ff"/>
<circle cx="384.9" cy="123.6" r="3.6" fill="#6699ff"/>
<circle cx="385.4" cy="140.5" r="3.6" fill="#6699ff"/>
<circle cx="385.9" cy="187.0" r="3.6" fill="#6699ff"/>
<circle cx="386.4" cy="137.8" r="3.6" fill="#6699ff"/>
<circle cx="386.9" cy="118.1" r="3.6" fill="#6699ff"/>
<circle cx="387.4" cy="122.3" r="3.6" fill="#6699ff"/>
<circle cx="387.9" cy="144.5" r="3.6" fill="#6699ff"/>
<circle cx="388.4" cy="143.9" r="3.6" fill="#6699ff"/>
<circle cx="388.9" cy="171.3" r="3.6" fill="#6699ff"/>
<circle cx="389.4" cy="193.0" r="3.6" fill="#6699ff"/>
<circle cx="389.9" cy="175.5" r="3.6" fill="#6699ff"/>
<circle cx="390.4" cy="132.8" r="3.6" fill="#6699ff"/>
<circle cx="390.9" cy="191.8" r="3.6" fill="#6699ff"/>
<circle cx="391.4" cy="125.9" r="3.6" fill="#6699ff"/>
<circle cx="391.9" cy="135.2" r="3.6" fill="#6699ff"/>
<circle cx="392.4" cy="160.3" r="3.6" fill="#6699ff"/>
<circle cx="392.9" cy="154.4" r="3.6" fill="#6699ff"/>
<circle cx="393.4" cy="190.6" r="3.6" fill="#6699ff"/>
<circle cx="393.9" cy="124.6" r="3.6" fill="#6699ff"/>
<circle cx="394.4" cy="126.2" r="3.6" fill="#6699ff"/>
<circle cx="394.9" cy="174.9" r="3.6" fill="#6699ff"/>
<circle cx="395.4" cy="181.3" r="3.6" fill="#6699ff"/>
<circle cx="395.9" cy="177.3" r="3.6" fill="#6699ff"/>
<circle cx="396.4" cy="192.2" r="3.6" fill="#6699ff"/>
<circle cx="396.9" cy="136.1" r="3.6" fill="#6699ff"/>
<circle cx="397.4" cy="189.9" r="3.6" fill="#6699ff"/>
<circle cx="397.9" cy="145.3" r="3.6" fill="#6699ff"/>
<circle cx="398.4" cy="111.1" r="3.6" fill="#6699ff"/>
<circle cx="398.9" cy="123.2" r="3.6" fill="#6699ff"/>
<circle cx="399.4" cy="120.6" r="3.6" fill="#6699ff"/>
<circle cx="399.9" cy="137.7" r="3.6" fill="#6699ff"/>
<circle cx="400.4" cy="160.5" r="3.6" fill="#6699ff"/>
<circle cx="400.9" cy="107.6" r="3.6" fill="#6699ff"/>
<circle cx="401.4" cy="187.6" r="3.6" fill="#6699ff"/>
<circle cx="401.9" cy="145.8" r="3.6" fill="#6699ff"/>
<circle cx="402.4" cy="167.8" r="3.6" fill="#6699ff"/>
<circle cx="402.9" cy="133.5" r="3.6" fill="#6699ff"/>
<circle cx="403.4" cy="181.6" r="3.6" fill="#6699ff"/>
<circle cx="403.9" cy="184.7" r="3.6" fill="#6699ff"/>
<circle cx="404.4" cy="116.7" r="3.6" fill="#6699ff"/>
<circle cx="404.9" cy="160.4" r="3.6" fill="#6699ff"/>
<circle cx="405.4" cy="122.0" r="3.6" fill="#6699ff"/>
<circle cx="405.9" cy="131.9" r="3.6" fill="#6699ff"/>
<circle cx="406.4" cy="147.5" r="3.6" fill="#6699ff"/>
<circle cx="406.9" cy="153.0" r="3.6" fill="#6699ff"/>
<circle cx="407.4" cy="135.1" r="3.6" fill="#6699ff"/>
<circle cx="407.9" cy="102.5" r="3.6" fill="#6699ff"/>
<circle cx="408.4" cy="148.1" r="3.6" fill="#6699ff"/>
<circle cx="408.9" cy="112.4" r="3.6" fill="#6699ff"/>
<circle cx="409.4" cy="156.4" r="3.6" fill="#6699ff"/>
<circle cx="409.9" cy="111.8" r="3.6" fill="#6699ff"/>
<circle cx="410.4" cy="173.8" r="3.6" fill="#6699ff"/>
<circle cx="410.9" cy="115.8" r="3.6" fill="#6699ff"/>
<circle cx="411.4" cy="142.9" r="3.6" fill="#6699ff"/>
<circle cx="411.9" cy="119.4" r="3.6" fill="#6699ff"/>
<circle cx="412.4" cy="135.1" r="3.6" fill="#6699ff"/>
<circle cx="412.9" cy="177.7" r="3.6" fill="#6699ff"/>
<circle cx="413.4" cy="138.3" r="3.6" fill="#6699ff"/>
<circle cx="413.9" cy="148.8" r="3.6" fill="#6699ff"/>
<circle cx="414.4" cy="99.6" r="3.6" fill="#6699ff"/>
<circle cx="414.9" cy="113.8" r="3.6" fill="#6699ff"/>
<circle cx="415.4" cy="145.4" r="3.6" fill="#6699ff"/>
<circle cx="415.9" cy="163.8" r="3.6" fill="#6699ff"/>
<circle cx="416.4" cy="107.5" r="3.6" fill="#6699ff"/>
<circle cx="416.9" cy="118.1" r="3.6" fill="#6699ff"/>
<circle cx="417.4" cy="142.0" r="3.6" fill="#6699ff"/>
<circle cx="417.9" cy="124.2" r="3.6" fill="#6699ff"/>
<circle cx="418.4" cy="160.4" r="3.6" fill="#6699ff"/>
<circle cx="418.9" cy="162.3" r="3.6" fill="#6699ff"/>
<circle cx="419.4" cy="108.4" r="3.6" fill="#6699ff"/>
<circle cx="419.9" cy="125.4" r="3.6" fill="#6699ff"/>
<circle cx="420.4" cy="164.0" r="3.6" fill="#6699ff"/>
<circle cx="420.9" cy="147.7" r="3.6" fill="#6699ff"/>
<circle cx="421.4" cy="137.4" r="3.6" fill="#6699ff"/>
<circle cx="421.9" cy="141.1" r="3.6" fill="#6699ff"/>
<circle cx="422.4" cy="150.2" r="3.6" fill="#6699ff"/>
<circle cx="422.9" cy="151.3" r="3.6" fill="#6699ff"/>
<circle cx="423.4" cy="162.8" r="3.6" fill="#6699ff"/>
<circle cx="423.9" cy="128.0" r="3.6" fill="#6699ff"/>
<circle cx="424.4" cy="190.5" r="3.6" fill="#6699ff"/>
<circle cx="424.9" cy="149.6" r="3.6" fill="#6699ff"/>
<circle cx="425.4" cy="173.2" r="3.6" fill="#6699ff"/>
<circle cx="425.9" cy="132.1" r="3.6" fill="#6699ff"/>
<circle cx="426.4" cy="165.1" r="3.6" fill="#6699ff"/>
<circle cx="426.9" cy="138.5" r="3.6" fill="#6699ff"/>
<circle cx="427.4" cy="107.1" r="3.6" fill="#6699ff"/>
<circle cx="427.9" cy="166.1" r="3.6" fill="#6699ff"/>
<circle cx="428.4" cy="136.2" r="3.6" fill="#6699ff"/>
<circle cx="428.9" cy="189.5" r="3.6" fill="#6699ff"/>
<circle cx="429.4" cy="104.0" r="3.6" fill="#6699ff"/>
<circle cx="429.9" cy="159.5" r="3.6" fill="#6699ff"/>
<circle cx="430.4" cy="109.1" r="3.6" fill="#6699ff"/>
<circle cx="430.9" cy="149.4" r="3.6" fill="#6699ff"/>
<circle cx="431.4" cy="153.3" r="3.6" fill="#6699ff"/>
<circle cx="431.9" cy="159.3" r="3.6" fill="#6699ff"/>
<circle cx="432.4" cy="120.5" r="3.6" fill="#6699ff"/>
<circle cx="433.4" cy="124.8" r="3.6" fill="#6699ff"/>
<circle cx="433.9" cy="99.0" r="3.6" fill="#6699ff"/>
<circle cx="434.4" cy="141.5" r="3.6" fill="#6699ff"/>
<circle cx="434.9" cy="133.4" r="3.6" fill="#6699ff"/>
<circle cx="435.4" cy="190.5" r="3.6" fill="#6699ff"/>
<circle cx="435.9" cy="126.4" r="3.6" fill="#6699ff"/>
<circle cx="436.4" cy="136.6" r="3.6" fill="#6699ff"/>
<circle cx="436.9" cy="125.3" r="3.6" fill="#6699ff"/>
<circle cx="437.4" cy="159.1" r="3.6" fill="#6699ff"/>
<circle cx="437.9" cy="103.5" r="3.6" fill="#6699ff"/>
<circle cx="438.4" cy="137.8" r="3.6" fill="#6699ff"/>
<circle cx="438.9" cy="104.1" r="3.6" fill="#6699ff"/>
<circle cx="439.4" cy="153.6" r="3.6" fill="#6699ff"/>
<circle cx="439.9" cy="157.3" r="3.6" fill="#6699ff"/>
<circle cx="440.4" cy="120.1" r="3.6" fill="#6699ff"/>
<circle cx="440.9" cy="127.8" r="3.6" fill="#6699ff"/>
<circle cx="441.4" cy="144.3" r="3.6" fill="#6699ff"/>
<circle cx="441.9" cy="170.9" r="3.6" fill="#6699ff"/>
<circle cx="442.4" cy="179.6" r="3.6" fill="#6699ff"/>
<circle cx="442.9" cy="167.9" r="3.6" fill="#6699ff"/>
<circle cx="443.4" cy="172.3" r="3.6" fill="#6699ff"/>
<circle cx="443.9" cy="136.8" r="3.6" fill="#6699ff"/>
<circle cx="444.4" cy="138.4" r="3.6" fill="#6699ff"/>
<circle cx="444.9" cy="188.1" r="3.6" fill="#6699ff"/>
<circle cx="445.4" cy="137.0" r="3.6" fill="#6699ff"/>
<circle cx="445.9" cy="131.5" r="3.6" fill="#6699ff"/>
<circle cx="446.4" cy="127.8" r="3.6" fill="#6699ff"/>
<circle cx="446.9" cy="167.5" r="3.6" fill="#6699ff"/>
<circle cx="447.4" cy="142.4" r="3.6" fill="#6699ff"/>
<circle cx="447.9" cy="187.3" r="3.6" fill="#6699ff"/>
<circle cx="448.4" cy="146.0" r="3.6" fill="#6699ff"/>
<circle cx="448.9" cy="102.8" r="3.6" fill="#6699ff"/>
<circle cx="449.4" cy="185.2" r="3.6" fill="#6699ff"/>
<circle cx="449.9" cy="186.3" r="3.6" fill="#6699ff"/>
<circle cx="450.4" cy="173.2" r="3.6" fill="#6699ff"/>
<circle cx="450.9" cy="119.7" r="3.6" fill="#6699ff"/>
<circle cx="451.4" cy="124.5" r="3.6" fill="#6699ff"/>
<circle cx="451.9" cy="139.2" r="3.6" fill="#6699ff"/>
<circle cx="452.4" cy="145.6" r="3.6" fill="#6699ff"/>
<circle cx="452.9" cy="101.3" r="3.6" fill="#6699ff"/>
<circle cx="453.4" cy="146.1" r="3.6" fill="#6699ff"/>
<circle cx="453.9" cy="140.4" r="3.6" fill="#6699ff"/>
<circle cx="454.4" cy="143.2" r="3.6" fill="#6699ff"/>
<circle cx="454.9" cy="106.2" r="3.6" fill="#6699ff"/>
<circle cx="455.5" cy="148.1" r="3.6" fill="#6699ff"/>
<circle cx="456.0" cy="122.0" r="3.6" fill="#6699ff"/>
<circle cx="456.5" cy="172.5" r="3.6" fill="#6699ff"/>
<circle cx="457.0" cy="139.5" r="3.6" fill="#6699ff"/>
<circle cx="457.5" cy="183.0" r="3.6" fill="#6699ff"/>
<circle cx="458.0" cy="178.6" r="3.6" fill="#6699ff"/>
<circle cx="458.5" cy="160.5" r="3.6" fill="#6699ff"/>
<circle cx="459.0" cy="141.9" r="3.6" fill="#6699ff"/>
<circle cx="459.5" cy="187.2" r="3.6" fill="#6699ff"/>
<circle cx="460.0" cy="157.3" r="3.6" fill="#6699ff"/>
<circle cx="460.5" cy="143.1" r="3.6" fill="#6699ff"/>
<circle cx="461.0" cy="132.9" r="3.6" fill="#6699ff"/>
<circle cx="461.5" cy="182.1" r="3.6" fill="#6699ff"/>
<circle cx="462.0" cy="153.5" r="3.6" fill="#6699ff"/>
<circle cx="462.5" cy="189.0" r="3.6" fill="#6699ff"/>
<circle cx="463.0" cy="138.4" r="3.6" fill="#6699ff"/>
<circle cx="463.5" cy="119.7" r="3.6" fill="#6699ff"/>
<circle cx="464.0" cy="161.2" r="3.6" fill="#6699ff"/>
<circle cx="464.5" cy="184.2" r="3.6" fill="#6699ff"/>
<circle cx="465.0" cy="154.1" r="3.6" fill="#6699ff"/>
<circle cx="465.5" cy="122.5" r="3.6" fill="#6699ff"/>
<circle cx="466.0" cy="131.6" r="3.6" fill="#6699ff"/>
<circle cx="466.5" cy="146.7" r="3.6" fill="#6699ff"/>
<circle cx="467.0" cy="112.5" r="3.6" fill="#6699ff"/>
<circle cx="467.5" cy="129.8" r="3.6" fill="#6699ff"/>
<circle cx="468.0" cy="171.0" r="3.6" fill="#6699ff"/>
<circle cx="468.5" cy="165.4" r="3.6" fill="#6699ff"/>
<circle cx="469.0" cy="172.1" r="3.6" fill="#6699ff"/>
<circle cx="469.5" cy="136.2" r="3.6" fill="#6699ff"/>
<circle cx="470.0" cy="145.6" r="3.6" fill="#6699ff"/>
<circle cx="470.5" cy="135.3" r="3.6" fill="#6699ff"/>
<circle cx="471.0" cy="129.0" r="3.6" fill="#6699ff"/>
<circle cx="471.5" cy="146.0" r="3.6" fill="#6699ff"/>
<circle cx="472.0" cy="188.1" r="3.6" fill="#6699ff"/>
<circle cx="472.5" cy="158.1" r="3.6" fill="#6699ff"/>
<circle cx="473.0" cy="191.4" r="3.6" fill="#6699ff"/>
<circle cx="473.5" cy="192.3" r="3.6" fill="#6699ff"/>
<circle cx="474.0" cy="154.9" r="3.6" fill="#6699ff"/>
<circle cx="474.5" cy="145.7" r="3.6" fill="#6699ff"/>
<circle cx="475.0" cy="154.8" r="3.6" fill="#6699ff"/>
<circle cx="475.5" cy="154.0" r="3.6" fill="#6699ff"/>
<circle cx="476.0" cy="155.5" r="3.6" fill="#6699ff"/>
<circle cx="476.5" cy="175.1" r="3.6" fill="#6699ff"/>
<circle cx="477.0" cy="162.6" r="3.6" fill="#6699ff"/>
<circle cx="477.5" cy="180.8" r="3.6" fill="#6699ff"/>
<circle cx="478.0" cy="122.3" r="3.6" fill="#6699ff"/>
<circle cx="478.5" cy="139.3" r="3.6" fill="#6699ff"/>
<circle cx="479.0" cy="167.1" r="3.6" fill="#6699ff"/>
<circle cx="479.5" cy="145.8" r="3.6" fill="#6699ff"/>
<circle cx="480.0" cy="172.8" r="3.6" fill="#6699ff"/>
<circle cx="480.5" cy="132.9" r="3.6" fill="#6699ff"/>
<circle cx="481.0" cy="132.7" r="3.6" fill="#6699ff"/>
<circle cx="481.5" cy="138.3" r="3.6" fill="#6699ff"/>
<circle cx="482.0" cy="189.3" r="3.6" fill="#6699ff"/>
<circle cx="482.5" cy="192.9" r="3.6" fill="#6699ff"/>
<circle cx="483.0" cy="156.6" r="3.6" fill="#6699ff"/>
<circle cx="483.5" cy="163.2" r="3.6" fill="#6699ff"/>
<circle cx="484.0" cy="190.8" r="3.6" fill="#6699ff"/>
<circle cx="484.5" cy="138.1" r="3.6" fill="#6699ff"/>
<circle cx="485.0" cy="161.7" r="3.6" fill="#6699ff"/>
<circle cx="485.5" cy="140.4" r="3.6" fill="#6699ff"/>
<circle cx="486.0" cy="175.1" r="3.6" fill="#6699ff"/>
<circle cx="486.5" cy="122.8" r="3.6" fill="#6699ff"/>
<circle cx="487.0" cy="188.4" r="3.6" fill="#6699ff"/>
<circle cx="487.5" cy="99.5" r="3.6" fill="#6699ff"/>
<circle cx="488.0" cy="187.0" r="3.6" fill="#6699ff"/>
<circle cx="488.5" cy="122.7" r="3.6" fill="#6699ff"/>
<circle cx="489.0" cy="173.6" r="3.6" fill="#6699ff"/>
<circle cx="489.5" cy="176.4" r="3.6" fill="#6699ff"/>
<circle cx="490.0" cy="187.7" r="3.6" fill="#6699ff"/>
<circle cx="490.5" cy="142.3" r="3.6" fill="#6699ff"/>
<circle cx="491.0" cy="181.7" r="3.6" fill="#6699ff"/>
<circle cx="491.5" cy="149.8" r="3.6" fill="#6699ff"/>
<circle cx="492.0" cy="138.4" r="3.6" fill="#6699ff"/>
<circle cx="492.5" cy="120.1" r="3.6" fill="#6699ff"/>
<circle cx="493.0" cy="185.4" r="3.6" fill="#6699ff"/>
<circle cx="493.5" cy="188.7" r="3.6" fill="#6699ff"/>
<circle cx="494.0" cy="181.9" r="3.6" fill="#6699ff"/>
<circle cx="494.5" cy="125.6" r="3.6" fill="#6699ff"/>
<circle cx="495.0" cy="102.1" r="3.6" fill="#6699ff"/>
<circle cx="495.5" cy="182.9" r="3.6" fill="#6699ff"/>
<circle cx="496.0" cy="129.3" r="3.6" fill="#6699ff"/>
<rect x="86" y="195" width="410" height="5" fill="#666"/>
<line x1="86" y1="98.39999999999998" x2="496" y2="98.39999999999998" stroke="#d04040" stroke-width="2.5"/>
<circle cx="86" cy="98.39999999999998" r="4.5" fill="#c03030"/>
<line x1="86" y1="221.5" x2="496" y2="221.5" stroke="#d04040" stroke-width="2.5"/>
<circle cx="86" cy="221.5" r="4.5" fill="#c03030"/>
<line x1="433.4000000000001" y1="61" x2="433.4000000000001" y2="134.9" stroke="#6699ff" stroke-width="2.2"/>
<circle cx="433.4000000000001" cy="61" r="3.8" fill="#ff0000"/>
<defs><linearGradient id="pg" x1="0" y1="0" x2="0" y2="1"><stop offset="0" stop-color="#dfeaff"/><stop offset="1" stop-color="#6d9cff"/></linearGradient></defs>
<path d="M416.9,29.5 A16.5,16.5 0 1 1 449.9,29.5 C449.9,38.5 437.4,45.5 433.4,54.5 C429.4,45.5 416.9,38.5 416.9,29.5Z" fill="url(#pg)"/>
<text x="433.4" y="34.5" text-anchor="middle" font-family="Liberation Sans" font-size="14" font-weight="bold" fill="#222" stroke="#fff" stroke-width="2.5" paint-order="stroke">68</text>
</svg><!--/C1--><div class="blur" style="left:1258px;top:585px;width:96px;height:12px;background:linear-gradient(#d07070,#f0c0c0 50%,#d07070);opacity:.55"></div><div class="blur" style="left:1258px;top:647px;width:88px;height:12px;background:linear-gradient(#70c070,#c0e8c0 50%,#70c070);opacity:.5"></div><div class="blur" style="left:1258px;top:709px;width:98px;height:12px;background:linear-gradient(#d07070,#f0c0c0 50%,#d07070);opacity:.55"></div><div class="blur" style="left:860px;top:727px;width:420px;height:12px;opacity:.6"></div>
<svg class="a" style="left:1424px;top:495px" width="466" height="311" viewBox="0 0 466 311">
<defs><linearGradient id="pg2" x1="0" y1="0" x2="0" y2="1"><stop offset="0" stop-color="#dfeaff"/><stop offset="1" stop-color="#6d9cff"/></linearGradient></defs>
<line x1="36.5" y1="20.200000000000045" x2="430.5999999999999" y2="20.200000000000045" stroke="#ebedf3" stroke-width="1.2"/>
<line x1="36.5" y1="55" x2="430.5999999999999" y2="55" stroke="#ebedf3" stroke-width="1.2"/>
<line x1="36.5" y1="122.79999999999995" x2="430.5999999999999" y2="122.79999999999995" stroke="#ebedf3" stroke-width="1.2"/>
<line x1="36.5" y1="191.29999999999995" x2="430.5999999999999" y2="191.29999999999995" stroke="#ebedf3" stroke-width="1.2"/>
<line x1="16" y1="259.5" x2="456" y2="259.5" stroke="#e8eaf0" stroke-width="1"/>
<rect x="98.4" y="166.5" width="23.2" height="70.0" fill="#4264dc"/>
<rect x="123.2" y="51.7" width="23.2" height="184.8" fill="#4264dc"/>
<rect x="148.0" y="21.0" width="23.2" height="215.5" fill="#4264dc"/>
<rect x="172.5" y="127.2" width="23.2" height="109.3" fill="#4264dc"/>
<rect x="197.3" y="148.0" width="23.2" height="88.5" fill="#4264dc"/>
<rect x="222.6" y="171.3" width="23.2" height="65.2" fill="#4264dc"/>
<rect x="247.0" y="198.7" width="23.2" height="37.8" fill="#4264dc"/>
<rect x="271.5" y="222.8" width="23.2" height="13.7" fill="#4264dc"/>
<rect x="296.0" y="221.3" width="23.2" height="15.2" fill="#4264dc"/>
<polyline points="26.0,257.8 28.5,257.7 30.9,257.6 33.4,257.6 35.8,257.4 38.3,257.3 40.8,257.2 43.2,257.0 45.7,256.7 48.1,256.5 50.6,256.1 53.0,255.7 55.5,255.3 58.0,254.7 60.4,254.1 62.9,253.3 65.3,252.5 67.8,251.5 70.2,250.3 72.7,249.0 75.2,247.5 77.6,245.8 80.1,243.8 82.5,241.6 85.0,239.1 87.5,236.4 89.9,233.3 92.4,229.9 94.8,226.2 97.3,222.1 99.8,217.6 102.2,212.7 104.7,207.5 107.1,201.8 109.6,195.8 112.0,189.3 114.5,182.5 117.0,175.3 119.4,167.7 121.9,159.9 124.3,151.7 126.8,143.4 129.2,134.8 131.7,126.1 134.2,117.2 136.6,108.4 139.1,99.6 141.5,91.0 144.0,82.5 146.5,74.3 148.9,66.4 151.4,58.9 153.8,52.0 156.3,45.6 158.8,39.8 161.2,34.7 163.7,30.3 166.1,26.8 168.6,24.0 171.0,22.2 173.5,21.2 176.0,21.1 178.4,21.9 180.9,23.5 183.3,26.1 185.8,29.5 188.2,33.7 190.7,38.6 193.2,44.2 195.6,50.5 198.1,57.4 200.5,64.7 203.0,72.5 205.5,80.6 207.9,89.1 210.4,97.7 212.8,106.5 215.3,115.3 217.8,124.1 220.2,132.9 222.7,141.5 225.1,149.9 227.6,158.1 230.0,166.0 232.5,173.7 235.0,180.9 237.4,187.9 239.9,194.4 242.3,200.5 244.8,206.3 247.2,211.6 249.7,216.6 252.2,221.1 254.6,225.3 257.1,229.1 259.5,232.6 262.0,235.7 264.5,238.6 266.9,241.1 269.4,243.3 271.8,245.3 274.3,247.1 276.8,248.7 279.2,250.0 281.7,251.2 284.1,252.3 286.6,253.2 289.0,253.9 291.5,254.6 294.0,255.2 296.4,255.6 298.9,256.0 301.3,256.4 303.8,256.7 306.2,256.9 308.7,257.1 311.2,257.3 313.6,257.4 316.1,257.5 318.5,257.6 321.0,257.7" fill="none" stroke="#f5d020" stroke-width="2.2" stroke-dasharray="2.5 2.5"/>
<polyline points="26.0,257.9 28.5,257.8 30.9,257.8 33.4,257.8 35.8,257.7 38.3,257.7 40.8,257.6 43.2,257.5 45.7,257.4 48.1,257.3 50.6,257.2 53.0,257.0 55.5,256.8 58.0,256.6 60.4,256.3 62.9,256.1 65.3,255.7 67.8,255.4 70.2,254.9 72.7,254.5 75.2,253.9 77.6,253.3 80.1,252.6 82.5,251.9 85.0,251.0 87.5,250.1 89.9,249.1 92.4,247.9 94.8,246.7 97.3,245.4 99.8,244.0 102.2,242.4 104.7,240.7 107.1,239.0 109.6,237.1 112.0,235.1 114.5,233.0 117.0,230.8 119.4,228.5 121.9,226.2 124.3,223.7 126.8,221.3 129.2,218.7 131.7,216.1 134.2,213.5 136.6,211.0 139.1,208.4 141.5,205.9 144.0,203.4 146.5,201.0 148.9,198.7 151.4,196.5 153.8,194.5 156.3,192.6 158.8,190.9 161.2,189.4 163.7,188.1 166.1,187.0 168.6,186.1 171.0,185.5 173.5,185.1 176.0,185.0 178.4,185.1 180.9,185.5 183.3,186.1 185.8,187.0 188.2,188.0 190.7,189.3 193.2,190.8 195.6,192.5 198.1,194.4 200.5,196.5 203.0,198.6 205.5,200.9 207.9,203.3 210.4,205.8 212.8,208.3 215.3,210.9 217.8,213.5 220.2,216.0 222.7,218.6 225.1,221.2 227.6,223.7 230.0,226.1 232.5,228.5 235.0,230.7 237.4,232.9 239.9,235.0 242.3,237.0 244.8,238.9 247.2,240.7 249.7,242.3 252.2,243.9 254.6,245.3 257.1,246.7 259.5,247.9 262.0,249.0 264.5,250.1 266.9,251.0 269.4,251.8 271.8,252.6 274.3,253.3 276.8,253.9 279.2,254.4 281.7,254.9 284.1,255.3 286.6,255.7 289.0,256.0 291.5,256.3 294.0,256.6 296.4,256.8 298.9,257.0 301.3,257.1 303.8,257.3 306.2,257.4 308.7,257.5 311.2,257.6 313.6,257.7 316.1,257.7 318.5,257.8 321.0,257.8" fill="none" stroke="#35a0e8" stroke-width="1.8" opacity=".9"/>
<line x1="98.40000000000009" y1="236" x2="98.40000000000009" y2="30" stroke="#5aa0a8" stroke-width="1.6" stroke-dasharray="4 3"/>
<path d="M98.40000000000009,20 L104,36 L98.40000000000009,32 L93,36Z" fill="#5aa0a8"/>
<circle cx="98.40000000000009" cy="236" r="4" fill="#5aa0a8"/>
<text transform="translate(88,148) rotate(-90)" font-family="Liberation Sans" font-size="13" fill="#8cc0c8">LSL(0)</text>
<text transform="translate(114,148) rotate(-90)" font-family="Liberation Sans" font-size="13" fill="#8cc0c8">USL(0)</text>
</svg><div class="blur" style="left:1440px;top:741px;width:55px;height:10px;opacity:.35"></div><div class="blur" style="left:1500px;top:741px;width:50px;height:10px;opacity:.35"></div><div class="blur" style="left:1585px;top:741px;width:50px;height:10px;opacity:.35"></div><div class="blur" style="left:1672px;top:741px;width:48px;height:10px;opacity:.35"></div><div class="blur" style="left:1757px;top:741px;width:50px;height:10px;opacity:.35"></div><div class="blur" style="left:1830px;top:741px;width:50px;height:10px;opacity:.35"></div><div class="a" style="left:1444px;top:742px;width:150px;height:14px;background:linear-gradient(90deg,rgba(255,255,255,0),rgba(180,210,240,.35),rgba(255,255,255,0));filter:blur(2px)"></div><div class="a" style="left:1680px;top:742px;width:120px;height:14px;background:linear-gradient(90deg,rgba(255,255,255,0),rgba(180,210,240,.35),rgba(255,255,255,0));filter:blur(2px)"></div><svg class="a" style="left:761px;top:864px" width="654" height="117" viewBox="0 0 654 117">
<defs><linearGradient id="pg3" x1="0" y1="0" x2="0" y2="1"><stop offset="0" stop-color="#dfeaff"/><stop offset="1" stop-color="#6d9cff"/></linearGradient></defs>
<line x1="86" y1="48.89999999999998" x2="496" y2="48.89999999999998" stroke="#e6e8f0" stroke-width="1"/>
<line x1="81" y1="48.89999999999998" x2="86" y2="48.89999999999998" stroke="#c8c8c8" stroke-width="1"/>
<text x="77" y="53.89999999999998" text-anchor="end" font-family="Liberation Sans" font-size="14" fill="#c4c4c4">60</text>
<line x1="86" y1="75.79999999999995" x2="496" y2="75.79999999999995" stroke="#e6e8f0" stroke-width="1"/>
<line x1="81" y1="75.79999999999995" x2="86" y2="75.79999999999995" stroke="#c8c8c8" stroke-width="1"/>
<text x="77" y="80.79999999999995" text-anchor="end" font-family="Liberation Sans" font-size="14" fill="#c4c4c4">50</text>
<line x1="86" y1="102" x2="496" y2="102" stroke="#e6e8f0" stroke-width="1"/>
<line x1="81" y1="102" x2="86" y2="102" stroke="#c8c8c8" stroke-width="1"/>
<text x="77" y="107" text-anchor="end" font-family="Liberation Sans" font-size="14" fill="#c4c4c4">40</text>
<line x1="86" y1="107.29999999999995" x2="496" y2="107.29999999999995" stroke="#d04040" stroke-width="2.5"/>
<circle cx="85.60000000000002" cy="107.29999999999995" r="4.5" fill="#c03030"/>
<line x1="115.29999999999995" y1="98.5" x2="115.29999999999995" y2="117" stroke="#6699ff" stroke-width="2.2"/>
<line x1="131" y1="90.5" x2="131" y2="117" stroke="#6699ff" stroke-width="2.2"/>
<line x1="139" y1="101.5" x2="139" y2="117" stroke="#6699ff" stroke-width="2.2"/>
<line x1="139.60000000000002" y1="107" x2="139.60000000000002" y2="117" stroke="#6699ff" stroke-width="2.2"/>
<line x1="150" y1="101" x2="150" y2="117" stroke="#6699ff" stroke-width="2.2"/>
<line x1="167.60000000000002" y1="93" x2="167.60000000000002" y2="117" stroke="#6699ff" stroke-width="2.2"/>
<line x1="167.60000000000002" y1="98.5" x2="167.60000000000002" y2="117" stroke="#6699ff" stroke-width="2.2"/>
<line x1="244.60000000000002" y1="98.5" x2="244.60000000000002" y2="117" stroke="#6699ff" stroke-width="2.2"/>
<line x1="255" y1="101" x2="255" y2="117" stroke="#6699ff" stroke-width="2.2"/>
<line x1="339" y1="106.5" x2="339" y2="117" stroke="#6699ff" stroke-width="2.2"/>
<line x1="433.4000000000001" y1="63.60000000000002" x2="433.4000000000001" y2="117" stroke="#6699ff" stroke-width="2.2"/>
<line x1="433.4000000000001" y1="71.60000000000002" x2="433.4000000000001" y2="117" stroke="#6699ff" stroke-width="2.2"/>
<line x1="454.5" y1="93" x2="454.5" y2="117" stroke="#6699ff" stroke-width="2.2"/>
<line x1="488.5" y1="93" x2="488.5" y2="117" stroke="#6699ff" stroke-width="2.2"/>
<line x1="99" y1="114" x2="99" y2="117" stroke="#6699ff" stroke-width="2.2"/>
<circle cx="99" cy="114" r="3.5" fill="#6699ff"/>
<line x1="109" y1="114" x2="109" y2="117" stroke="#6699ff" stroke-width="2.2"/>
<circle cx="109" cy="114" r="3.5" fill="#6699ff"/>
<line x1="117" y1="113" x2="117" y2="117" stroke="#6699ff" stroke-width="2.2"/>
<circle cx="117" cy="113" r="3.5" fill="#6699ff"/>
<line x1="132" y1="111" x2="132" y2="117" stroke="#6699ff" stroke-width="2.2"/>
<circle cx="132" cy="111" r="3.5" fill="#6699ff"/>
<line x1="142" y1="112" x2="142" y2="117" stroke="#6699ff" stroke-width="2.2"/>
<circle cx="142" cy="112" r="3.5" fill="#6699ff"/>
<line x1="152" y1="113" x2="152" y2="117" stroke="#6699ff" stroke-width="2.2"/>
<circle cx="152" cy="113" r="3.5" fill="#6699ff"/>
<line x1="179" y1="114" x2="179" y2="117" stroke="#6699ff" stroke-width="2.2"/>
<circle cx="179" cy="114" r="3.5" fill="#6699ff"/>
<line x1="196" y1="112" x2="196" y2="117" stroke="#6699ff" stroke-width="2.2"/>
<circle cx="196" cy="112" r="3.5" fill="#6699ff"/>
<line x1="211" y1="112" x2="211" y2="117" stroke="#6699ff" stroke-width="2.2"/>
<circle cx="211" cy="112" r="3.5" fill="#6699ff"/>
<line x1="223" y1="116" x2="223" y2="117" stroke="#6699ff" stroke-width="2.2"/>
<circle cx="223" cy="116" r="3.5" fill="#6699ff"/>
<line x1="252" y1="114" x2="252" y2="117" stroke="#6699ff" stroke-width="2.2"/>
<circle cx="252" cy="114" r="3.5" fill="#6699ff"/>
<line x1="267" y1="114" x2="267" y2="117" stroke="#6699ff" stroke-width="2.2"/>
<circle cx="267" cy="114" r="3.5" fill="#6699ff"/>
<line x1="301" y1="114" x2="301" y2="117" stroke="#6699ff" stroke-width="2.2"/>
<circle cx="301" cy="114" r="3.5" fill="#6699ff"/>
<line x1="314" y1="114" x2="314" y2="117" stroke="#6699ff" stroke-width="2.2"/>
<circle cx="314" cy="114" r="3.5" fill="#6699ff"/>
<line x1="351" y1="113" x2="351" y2="117" stroke="#6699ff" stroke-width="2.2"/>
<circle cx="351" cy="113" r="3.5" fill="#6699ff"/>
<line x1="451" y1="115" x2="451" y2="117" stroke="#6699ff" stroke-width="2.2"/>
<circle cx="451" cy="115" r="3.5" fill="#6699ff"/>
<line x1="465" y1="115" x2="465" y2="117" stroke="#6699ff" stroke-width="2.2"/>
<circle cx="465" cy="115" r="3.5" fill="#6699ff"/>
<line x1="471" y1="114" x2="471" y2="117" stroke="#6699ff" stroke-width="2.2"/>
<circle cx="471" cy="114" r="3.5" fill="#6699ff"/>
<circle cx="115.29999999999995" cy="98.5" r="3.6" fill="#ee0000"/>
<circle cx="131" cy="90.5" r="3.6" fill="#ee0000"/>
<circle cx="139" cy="101.5" r="3.6" fill="#ee0000"/>
<circle cx="139.60000000000002" cy="107" r="3.6" fill="#ee0000"/>
<circle cx="150" cy="101" r="3.6" fill="#ee0000"/>
<circle cx="167.60000000000002" cy="93" r="3.6" fill="#ee0000"/>
<circle cx="167.60000000000002" cy="98.5" r="3.6" fill="#ee0000"/>
<circle cx="244.60000000000002" cy="98.5" r="3.6" fill="#ee0000"/>
<circle cx="255" cy="101" r="3.6" fill="#ee0000"/>
<circle cx="339" cy="106.5" r="3.6" fill="#ee0000"/>
<circle cx="433.4000000000001" cy="63.60000000000002" r="3.6" fill="#ee0000"/>
<circle cx="433.4000000000001" cy="71.60000000000002" r="3.6" fill="#ee0000"/>
<circle cx="454.5" cy="93" r="3.6" fill="#ee0000"/>
<circle cx="488.5" cy="93" r="3.6" fill="#ee0000"/>
<path d="M416.9,33.0 A16.5,16.5 0 1 1 449.9,33.0 C449.9,42.0 437.4,49.0 433.4,58.0 C429.4,49.0 416.9,42.0 416.9,33.0Z" fill="url(#pg3)"/>
<text x="433.4" y="38.0" text-anchor="middle" font-family="Liberation Sans" font-size="13" fill="#222" stroke="#fff" stroke-width="2.5" paint-order="stroke">55</text>
</svg><div class="blur" style="left:1258px;top:964px;width:104px;height:12px;background:linear-gradient(#d07070,#f0c0c0 50%,#d07070);opacity:.55"></div><svg class="a" style="left:1424px;top:864px" width="466" height="117" viewBox="0 0 466 117">
<line x1="88" y1="49.39999999999998" x2="381" y2="49.39999999999998" stroke="#777" stroke-width="1.3" stroke-dasharray="5 4"/>
<text x="76" y="54.89999999999998" text-anchor="end" font-family="Liberation Sans" font-size="15" fill="#666">100</text>
<line x1="88" y1="81.79999999999995" x2="381" y2="81.79999999999995" stroke="#777" stroke-width="1.3" stroke-dasharray="5 4"/>
<text x="76" y="87.29999999999995" text-anchor="end" font-family="Liberation Sans" font-size="15" fill="#666">80</text>
<line x1="88" y1="113.29999999999995" x2="381" y2="113.29999999999995" stroke="#777" stroke-width="1.3" stroke-dasharray="5 4"/>
<text x="76" y="118.79999999999995" text-anchor="end" font-family="Liberation Sans" font-size="15" fill="#666">60</text>
<line x1="88" y1="56" x2="88" y2="117" stroke="#777" stroke-width="1.4"/>
<path d="M88,49 L95,65 L88,62 L81,65Z" fill="#666"/>
<line x1="255.5" y1="117" x2="365.4000000000001" y2="53" stroke="#f5a010" stroke-width="2"/>
<circle cx="178.6" cy="121.2" r="5.2" fill="#2fd6c3"/>
<circle cx="180.4" cy="121.3" r="5.2" fill="#2fd6c3"/>
<circle cx="181.5" cy="119.8" r="5.2" fill="#2fd6c3"/>
<circle cx="183.2" cy="119.7" r="5.2" fill="#2fd6c3"/>
<circle cx="184.5" cy="118.9" r="5.2" fill="#2fd6c3"/>
<circle cx="185.0" cy="116.3" r="5.2" fill="#2fd6c3"/>
<circle cx="186.2" cy="115.2" r="5.2" fill="#2fd6c3"/>
<circle cx="188.8" cy="117.0" r="5.2" fill="#2fd6c3"/>
<circle cx="189.3" cy="114.3" r="5.2" fill="#2fd6c3"/>
<circle cx="190.6" cy="113.4" r="5.2" fill="#2fd6c3"/>
<circle cx="193.0" cy="114.9" r="5.2" fill="#2fd6c3"/>
<circle cx="193.6" cy="112.4" r="5.2" fill="#2fd6c3"/>
<circle cx="195.5" cy="112.7" r="5.2" fill="#2fd6c3"/>
<circle cx="196.2" cy="110.8" r="5.2" fill="#2fd6c3"/>
<circle cx="197.8" cy="110.5" r="5.2" fill="#2fd6c3"/>
<circle cx="198.4" cy="108.2" r="5.2" fill="#2fd6c3"/>
<circle cx="200.5" cy="108.8" r="5.2" fill="#2fd6c3"/>
<circle cx="202.1" cy="108.7" r="5.2" fill="#2fd6c3"/>
<circle cx="203.0" cy="106.9" r="5.2" fill="#2fd6c3"/>
<circle cx="204.6" cy="106.7" r="5.2" fill="#2fd6c3"/>
<circle cx="205.8" cy="105.7" r="5.2" fill="#2fd6c3"/>
<circle cx="206.3" cy="103.2" r="5.2" fill="#2fd6c3"/>
<circle cx="208.6" cy="104.4" r="5.2" fill="#2fd6c3"/>
<circle cx="209.7" cy="103.1" r="5.2" fill="#2fd6c3"/>
<circle cx="210.6" cy="101.5" r="5.2" fill="#2fd6c3"/>
<circle cx="211.5" cy="100.0" r="5.2" fill="#2fd6c3"/>
<circle cx="214.1" cy="101.6" r="5.2" fill="#2fd6c3"/>
<circle cx="214.8" cy="99.7" r="5.2" fill="#2fd6c3"/>
<circle cx="216.5" cy="99.7" r="5.2" fill="#2fd6c3"/>
<circle cx="218.1" cy="99.4" r="5.2" fill="#2fd6c3"/>
<circle cx="219.2" cy="98.2" r="5.2" fill="#2fd6c3"/>
<circle cx="220.8" cy="98.0" r="5.2" fill="#2fd6c3"/>
<circle cx="221.4" cy="95.8" r="5.2" fill="#2fd6c3"/>
<circle cx="223.3" cy="96.2" r="5.2" fill="#2fd6c3"/>
<circle cx="224.1" cy="94.5" r="5.2" fill="#2fd6c3"/>
<circle cx="226.1" cy="95.1" r="5.2" fill="#2fd6c3"/>
<circle cx="227.4" cy="94.3" r="5.2" fill="#2fd6c3"/>
<circle cx="227.6" cy="91.4" r="5.2" fill="#2fd6c3"/>
<circle cx="229.0" cy="90.8" r="5.2" fill="#2fd6c3"/>
<circle cx="230.4" cy="90.3" r="5.2" fill="#2fd6c3"/>
<circle cx="232.8" cy="91.7" r="5.2" fill="#2fd6c3"/>
<circle cx="233.4" cy="89.6" r="5.2" fill="#2fd6c3"/>
<circle cx="235.0" cy="89.4" r="5.2" fill="#2fd6c3"/>
<circle cx="235.9" cy="87.8" r="5.2" fill="#2fd6c3"/>
<circle cx="237.5" cy="87.7" r="5.2" fill="#2fd6c3"/>
<circle cx="238.6" cy="86.7" r="5.2" fill="#2fd6c3"/>
<circle cx="239.9" cy="86.0" r="5.2" fill="#2fd6c3"/>
<circle cx="241.6" cy="85.9" r="5.2" fill="#2fd6c3"/>
<circle cx="242.9" cy="85.3" r="5.2" fill="#2fd6c3"/>
<circle cx="244.6" cy="85.4" r="5.2" fill="#2fd6c3"/>
<circle cx="245.7" cy="84.2" r="5.2" fill="#2fd6c3"/>
<circle cx="247.3" cy="84.2" r="5.2" fill="#2fd6c3"/>
<circle cx="248.6" cy="83.4" r="5.2" fill="#2fd6c3"/>
<circle cx="250.0" cy="83.1" r="5.2" fill="#2fd6c3"/>
<circle cx="251.0" cy="81.7" r="5.2" fill="#2fd6c3"/>
<circle cx="251.7" cy="79.8" r="5.2" fill="#2fd6c3"/>
<circle cx="253.9" cy="80.9" r="5.2" fill="#2fd6c3"/>
<circle cx="255.3" cy="80.6" r="5.2" fill="#2fd6c3"/>
<circle cx="256.6" cy="79.8" r="5.2" fill="#2fd6c3"/>
<circle cx="257.5" cy="78.4" r="5.2" fill="#2fd6c3"/>
<circle cx="259.0" cy="78.1" r="5.2" fill="#2fd6c3"/>
<circle cx="259.7" cy="76.3" r="5.2" fill="#2fd6c3"/>
<circle cx="261.8" cy="77.3" r="5.2" fill="#2fd6c3"/>
<circle cx="262.8" cy="76.1" r="5.2" fill="#2fd6c3"/>
<circle cx="263.8" cy="74.8" r="5.2" fill="#2fd6c3"/>
<circle cx="264.9" cy="73.7" r="5.2" fill="#2fd6c3"/>
<circle cx="267.1" cy="75.0" r="5.2" fill="#2fd6c3"/>
<circle cx="268.6" cy="74.8" r="5.2" fill="#2fd6c3"/>
<circle cx="268.9" cy="72.1" r="5.2" fill="#2fd6c3"/>
<circle cx="271.0" cy="73.3" r="5.2" fill="#2fd6c3"/>
<circle cx="271.9" cy="71.8" r="5.2" fill="#2fd6c3"/>
<circle cx="272.9" cy="70.7" r="5.2" fill="#2fd6c3"/>
<circle cx="274.4" cy="70.5" r="5.2" fill="#2fd6c3"/>
<circle cx="276.3" cy="71.1" r="5.2" fill="#2fd6c3"/>
<circle cx="277.8" cy="70.8" r="5.2" fill="#2fd6c3"/>
<circle cx="278.2" cy="68.4" r="5.2" fill="#2fd6c3"/>
<circle cx="280.1" cy="69.2" r="5.2" fill="#2fd6c3"/>
<circle cx="280.8" cy="67.4" r="5.2" fill="#2fd6c3"/>
<circle cx="282.9" cy="68.4" r="5.2" fill="#2fd6c3"/>
<circle cx="283.8" cy="67.1" r="5.2" fill="#2fd6c3"/>
<circle cx="285.7" cy="67.8" r="5.2" fill="#2fd6c3"/>
<circle cx="287.2" cy="67.5" r="5.2" fill="#2fd6c3"/>
<circle cx="288.0" cy="66.0" r="5.2" fill="#2fd6c3"/>
<circle cx="289.8" cy="66.6" r="5.2" fill="#2fd6c3"/>
<circle cx="290.4" cy="64.7" r="5.2" fill="#2fd6c3"/>
<circle cx="291.5" cy="63.7" r="5.2" fill="#2fd6c3"/>
<circle cx="293.4" cy="64.4" r="5.2" fill="#2fd6c3"/>
<circle cx="294.1" cy="62.8" r="5.2" fill="#2fd6c3"/>
<circle cx="295.6" cy="62.7" r="5.2" fill="#2fd6c3"/>
<circle cx="297.2" cy="62.7" r="5.2" fill="#2fd6c3"/>
<circle cx="298.7" cy="62.7" r="5.2" fill="#2fd6c3"/>
<circle cx="299.6" cy="61.3" r="5.2" fill="#2fd6c3"/>
<circle cx="300.8" cy="60.7" r="5.2" fill="#2fd6c3"/>
<circle cx="303.0" cy="61.9" r="5.2" fill="#2fd6c3"/>
<circle cx="303.7" cy="60.4" r="5.2" fill="#2fd6c3"/>
<circle cx="305.7" cy="61.3" r="5.2" fill="#2fd6c3"/>
<circle cx="307.0" cy="60.8" r="5.2" fill="#2fd6c3"/>
<circle cx="307.8" cy="59.4" r="5.2" fill="#2fd6c3"/>
<circle cx="309.2" cy="59.2" r="5.2" fill="#2fd6c3"/>
<circle cx="310.6" cy="58.9" r="5.2" fill="#2fd6c3"/>
<circle cx="312.0" cy="58.8" r="5.2" fill="#2fd6c3"/>
<circle cx="313.3" cy="58.3" r="5.2" fill="#2fd6c3"/>
<circle cx="314.6" cy="57.9" r="5.2" fill="#2fd6c3"/>
<circle cx="316.0" cy="57.7" r="5.2" fill="#2fd6c3"/>
<circle cx="317.6" cy="57.9" r="5.2" fill="#2fd6c3"/>
<circle cx="318.5" cy="56.8" r="5.2" fill="#2fd6c3"/>
<circle cx="319.8" cy="56.3" r="5.2" fill="#2fd6c3"/>
<circle cx="321.4" cy="56.5" r="5.2" fill="#2fd6c3"/>
<circle cx="322.3" cy="55.3" r="5.2" fill="#2fd6c3"/>
<circle cx="323.7" cy="55.1" r="5.2" fill="#2fd6c3"/>
<circle cx="325.6" cy="56.0" r="5.2" fill="#2fd6c3"/>
<circle cx="326.5" cy="54.9" r="5.2" fill="#2fd6c3"/>
<circle cx="327.9" cy="54.7" r="5.2" fill="#2fd6c3"/>
<circle cx="328.7" cy="53.4" r="5.2" fill="#2fd6c3"/>
<circle cx="330.4" cy="53.9" r="5.2" fill="#2fd6c3"/>
<circle cx="331.9" cy="53.9" r="5.2" fill="#2fd6c3"/>
<circle cx="332.7" cy="52.6" r="5.2" fill="#2fd6c3"/>
<circle cx="334.6" cy="53.4" r="5.2" fill="#2fd6c3"/>
<circle cx="335.9" cy="53.2" r="5.2" fill="#2fd6c3"/>
<circle cx="336.8" cy="52.0" r="5.2" fill="#2fd6c3"/>
<circle cx="338.6" cy="52.7" r="5.2" fill="#2fd6c3"/>
<circle cx="339.8" cy="52.2" r="5.2" fill="#2fd6c3"/>
<circle cx="341.3" cy="52.3" r="5.2" fill="#2fd6c3"/>
<circle cx="342.3" cy="51.5" r="5.2" fill="#2fd6c3"/>
<circle cx="343.9" cy="51.9" r="5.2" fill="#2fd6c3"/>
<circle cx="345.3" cy="51.7" r="5.2" fill="#2fd6c3"/>
<circle cx="346.1" cy="50.4" r="5.2" fill="#2fd6c3"/>
<circle cx="347.4" cy="50.3" r="4.6" fill="#2fd6c3"/>
<circle cx="349.2" cy="51.0" r="4.6" fill="#2fd6c3"/>
<circle cx="350.8" cy="51.3" r="4.6" fill="#2fd6c3"/>
<circle cx="351.6" cy="50.0" r="4.6" fill="#2fd6c3"/>
<circle cx="353.0" cy="50.2" r="4.6" fill="#2fd6c3"/>
<circle cx="354.5" cy="50.2" r="4.6" fill="#2fd6c3"/>
<circle cx="355.6" cy="49.7" r="4.6" fill="#2fd6c3"/>
<circle cx="357.0" cy="49.6" r="4.6" fill="#2fd6c3"/>
<circle cx="358.3" cy="49.4" r="4.6" fill="#2fd6c3"/>
<circle cx="359.6" cy="49.3" r="4.6" fill="#2fd6c3"/>
<circle cx="361.1" cy="49.5" r="4.6" fill="#2fd6c3"/>
<circle cx="362.2" cy="49.0" r="4.6" fill="#2fd6c3"/>
<circle cx="363.6" cy="49.0" r="4.6" fill="#2fd6c3"/>
<circle cx="365.2" cy="49.4" r="4.6" fill="#2fd6c3"/>
<circle cx="366.0" cy="48.3" r="4.6" fill="#2fd6c3"/>
<circle cx="367.7" cy="49.0" r="4.6" fill="#2fd6c3"/>
<circle cx="369.2" cy="49.1" r="4.6" fill="#2fd6c3"/>
<circle cx="370.2" cy="48.5" r="4.6" fill="#2fd6c3"/>
<circle cx="371.5" cy="48.3" r="4.6" fill="#2fd6c3"/>
<circle cx="373.2" cy="49.1" r="4.6" fill="#2fd6c3"/>
<circle cx="374.2" cy="48.3" r="4.6" fill="#2fd6c3"/>
<circle cx="375.5" cy="48.2" r="4.6" fill="#2fd6c3"/>
<circle cx="377.0" cy="48.5" r="4.6" fill="#2fd6c3"/>
</svg>
<div class="a" style="left:1889px;top:447px;width:26px;height:534px;background:#f1f1f1"></div>
<div class="a" style="left:1892px;top:472px;width:21px;height:214px;background:#c1c1c1"></div>
<svg class="a" style="left:1897px;top:456px" width="12" height="8" viewBox="0 0 12 8" fill="#a3a3a3"><path d="M0 7 L6 1 L12 7Z"/></svg>
<svg class="a" style="left:1897px;top:963px" width="12" height="8" viewBox="0 0 12 8" fill="#505050"><path d="M0 1 L6 7 L12 1Z"/></svg>
<div class="a" style="left:760px;top:981px;width:1130px;height:24px;background:#f1f1f1"></div>
<div class="a" style="left:786px;top:983px;width:1074px;height:20px;background:#c1c1c1"></div>
<svg class="a" style="left:768px;top:987px" width="8" height="12" viewBox="0 0 8 12" fill="#a3a3a3"><path d="M7 0 L1 6 L7 12Z"/></svg>
<svg class="a" style="left:1874px;top:987px" width="8" height="12" viewBox="0 0 8 12" fill="#505050"><path d="M1 0 L7 6 L1 12Z"/></svg>
<div class="a" style="left:1890px;top:981px;width:25px;height:24px;background:#dcdcdc"></div>
<!-- FOOTER -->
<div class="a" style="left:267px;top:1005px;width:1650px;height:19px;background:#fff"></div>
<svg class="a" style="left:1668px;top:1005px" width="17" height="16" viewBox="0 0 17 16"><path d="M8.5 0.5 L10.5 2.3 L13.3 1.8 L13.8 4.6 L16.3 6 L15 8.5 L16.3 11 L13.8 12.4 L13.3 15.2 L10.5 14.7 L8.5 16 L6.5 14.7 L3.7 15.2 L3.2 12.4 L0.7 11 L2 8.5 L0.7 6 L3.2 4.6 L3.7 1.8 L6.5 2.3Z" fill="#3451c0"/><circle cx="8.5" cy="8.3" r="3" fill="#fff"/><circle cx="8.5" cy="8.3" r="1.6" fill="#3451c0"/></svg>
<div class="a" style="left:1693px;top:1006px;width:1px;height:14px;background:#e6e6e6"></div>
<svg class="a" style="left:1703px;top:1006px" width="16" height="14" viewBox="0 0 16 14"><path d="M1 4 H5 L14 0 V13 L5 9.5 H4 L5 13 H3 L2 9.5 H1Z" fill="#3451c0"/></svg>
<div class="a" style="left:1728px;top:1006px;width:1px;height:14px;background:#e6e6e6"></div>
<div class="t" style="left:1738px;top:1005px;font-size:14.5px;color:#777">Powered By <span style="color:#111">iBKLinker</span></div>
<svg class="a" style="left:1890px;top:1006px" width="19" height="15" viewBox="0 0 19 15"><path d="M18 0 L17 15 L13 12Z" fill="#999"/><path d="M2 14 L14 13 L12 10 L5 10Z" fill="#c42020"/><circle cx="10" cy="7" r="4" fill="none" stroke="#c42020" stroke-width="2.2"/><path d="M4 1 L18 0 L15 3 L7 3Z" fill="#c42020"/></svg>
<div class="a" style="left:0;top:1024px;width:1917px;height:2px;background:#c4c4c4"></div>

<!-- dividers -->
<div class="a" style="left:758px;top:86px;width:2px;height:919px;background:#3059db"></div>
<div class="a" style="left:269px;top:445px;width:1646px;height:2px;background:#3059db"></div>
<div class="a" style="left:267px;top:719px;width:491px;height:2px;background:#3059db"></div>

</body></html>
